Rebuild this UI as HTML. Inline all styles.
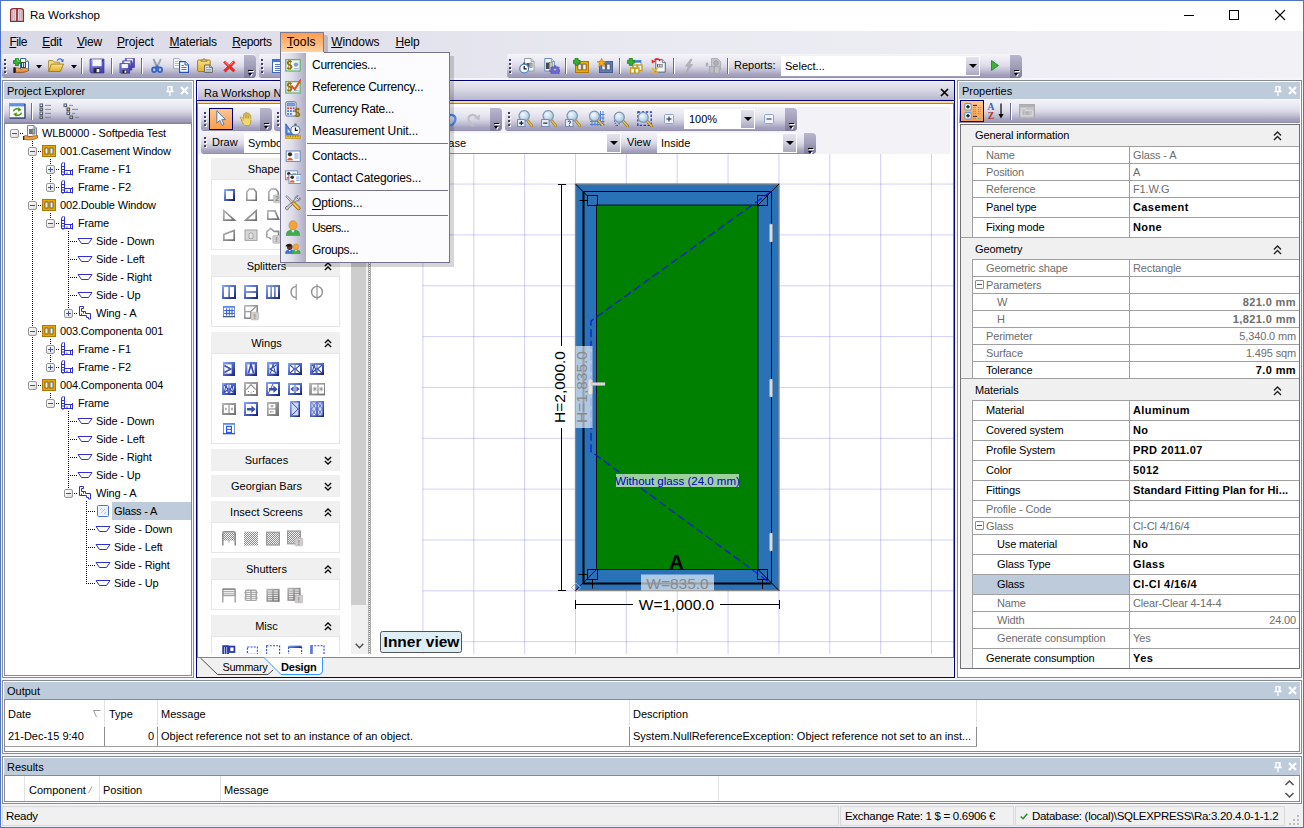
<!DOCTYPE html>
<html><head><meta charset="utf-8"><title>Ra Workshop</title>
<style>
html,body{margin:0;padding:0;}
body{width:1304px;height:828px;overflow:hidden;background:#4f74c4;font-family:"Liberation Sans",sans-serif;font-size:11px;color:#000;}
#win{position:absolute;left:0;top:0;width:1304px;height:828px;background:linear-gradient(90deg,#d9d8e6 0%,#e9e9f1 50%,#f1f1f6 100%);overflow:hidden;}
#win *{box-sizing:border-box;}
.abs{position:absolute;}
svg{display:block;}
.wb{position:absolute;background:#4f74c4;z-index:50;}
#title{position:absolute;left:0;top:0;width:1304px;height:31px;background:#fff;}
#title .appico{position:absolute;left:9px;top:7px;width:16px;height:16px;}
#title .tt{position:absolute;left:30px;top:7px;font-size:11.6px;line-height:16px;white-space:nowrap;}
.capbtn{position:absolute;}
#menubar{position:absolute;left:0;top:31px;width:1304px;height:23px;}
.mi{position:absolute;top:4px;font-size:12px;line-height:15px;white-space:nowrap;}
.mi u{text-decoration:underline;text-underline-offset:1px;text-decoration-thickness:1px;}
.mhl{position:absolute;left:280px;top:1px;width:44px;height:21px;border:1px solid #7d7b98;border-bottom:none;background:linear-gradient(180deg,#ff9d4e 0%,#ffb877 50%,#ffd6a6 100%);}
/* docked panel */
.panel{position:absolute;border:1px solid #868a95;background:#fff;}
.panel .hdr{position:absolute;left:1px;top:1px;right:1px;height:17px;background:#becbda;font-size:11px;line-height:17px;padding-left:3px;padding-top:1px;white-space:nowrap;}
.panel .ptb{position:absolute;left:1px;right:1px;top:18px;height:24px;background:linear-gradient(180deg,#f4f4f9 0%,#eae9f2 28%,#d9d8e5 52%,#bcbacf 72%,#a3a1bd 86%,#9f9dba 95%,#83819d 100%);}
.pin{position:absolute;top:4px;}
.tree{position:absolute;border:1px solid #868a95;background:#fff;overflow:hidden;}
.trow{position:absolute;left:0;height:18px;white-space:nowrap;}
.trow .tx{position:absolute;top:2px;font-size:11px;line-height:14px;padding:0 2px;letter-spacing:-0.15px;}
.trow .tx.sel{background:#becbda;top:0;height:18px;line-height:18px;padding:0 3px 0 2px;left:0;right:0;}
.exp{position:absolute;width:9px;height:9px;border:1px solid #979797;border-radius:2px;background:linear-gradient(135deg,#fff,#dedede);}
.exp i{position:absolute;left:1px;top:3px;width:5px;height:1px;background:#3a559a;}
.exp b{position:absolute;left:3px;top:1px;width:1px;height:5px;background:#3a559a;}
.dv{position:absolute;width:1px;background-image:linear-gradient(180deg,#000 50%,transparent 50%);background-size:1px 2px;}
.dh{position:absolute;height:1px;background-image:linear-gradient(90deg,#000 50%,transparent 50%);background-size:2px 1px;}
.tico{position:absolute;width:16px;height:16px;}
/* toolbars */
.tb{position:absolute;height:24px;background:linear-gradient(180deg,#f4f4f9 0%,#eae9f2 28%,#d9d8e5 52%,#bcbacf 72%,#a3a1bd 86%,#9f9dba 95%,#8a88a5 100%);border-radius:2px 4px 4px 3px;}
.tb .ovf{position:absolute;right:0;top:1px;width:12px;height:23px;border-radius:0 4px 4px 0;background:linear-gradient(180deg,#b9b7cd 0%,#a3a1bb 45%,#7c7a99 100%);}
.tb .ovf:before{content:"";position:absolute;left:4px;top:15px;width:5px;height:1px;background:#000;box-shadow:1px 1px 0 #fff;}
.tb .ovf:after{content:"";position:absolute;left:4px;top:18px;border:solid transparent;border-width:3px 2.5px 0 2.5px;border-top-color:#000;filter:drop-shadow(1px 1px 0 #fff);}
.grip{position:absolute;left:2px;top:5px;width:2px;height:2px !important;background:#3f3f74;box-shadow:0 4px 0 #3f3f74,0 8px 0 #3f3f74,0 12px 0 #3f3f74,1px 1px 0 #fff,1px 5px 0 #fff,1px 9px 0 #fff,1px 13px 0 #fff;}
.grip.g3{box-shadow:0 4px 0 #3f3f74,0 8px 0 #3f3f74,1px 1px 0 #fff,1px 5px 0 #fff,1px 9px 0 #fff;}
.tsep{position:absolute;top:4px;width:2px;height:16px;border-left:1px solid #6d6b8f;border-right:1px solid #fff;}
.ti{position:absolute;width:16px;height:16px;}
.dar{position:absolute;width:6px;height:4px;}
.combo{position:absolute;background:#fff;font-size:11px;white-space:nowrap;}
.combo .cb{position:absolute;right:1px;top:1px;bottom:1px;width:13px;background:linear-gradient(180deg,#e4e3ed 0%,#cfcedd 50%,#a9a7c1 100%);}
.combo .cb:after{content:"";position:absolute;left:2.5px;top:7px;border:solid transparent;border-width:4px 4px 0 4px;border-top-color:#000;}
.tlabel{position:absolute;font-size:11px;white-space:nowrap;}
/* document window */
#doc{position:absolute;left:196px;top:80px;width:759px;height:598px;border:1px solid #00007f;background:#fff;}
#doc .dt{position:absolute;left:0;top:0;right:0;height:19px;background:linear-gradient(180deg,#e9e8f1 0%,#d5d4e2 50%,#b8b6cd 100%);border-top:1px solid #f4f4f9;border-left:1px solid #f4f4f9;font-size:11px;line-height:17px;padding-left:6px;padding-top:3px;white-space:nowrap;}
#doc .l1{position:absolute;left:0;right:0;top:19px;height:1px;background:#00007f;}
#doc .l2{position:absolute;left:0;right:0;top:20px;height:2px;background:#ffd98c;}
#doc .inner{position:absolute;left:0;top:22px;right:0;height:555px;border:1px solid #3399ff;background:#fff;}
#doc .tabs{position:absolute;left:0;right:0;top:577px;height:19px;background:#f0f0f0;z-index:3;}
.dock{position:absolute;left:0;top:0;right:3px;height:50px;background:#f2f2f7;}
.tbox{position:absolute;background:#f0f0f0;font-size:11px;text-align:center;}
.tgrp{position:absolute;border:1px solid #e6e6e6;background:#fff;}
.chev{position:absolute;}
.xi{position:absolute;width:14px;height:14px;}
/* property grid */
.pg{position:absolute;border:1px solid #6f7177;background:#f0f0f0;overflow:hidden;}
.pr{position:absolute;left:11px;right:0;background:#fff;border-top:1px solid #a0a0a0;border-left:1px solid #a0a0a0;font-size:11px;white-space:nowrap;letter-spacing:-0.14px;}
.pr .n{position:absolute;left:0;top:0;bottom:0;width:157px;border-right:1px solid #a0a0a0;padding-left:13px;}
.pr .v{position:absolute;left:157px;top:0;bottom:0;right:0;padding-left:3px;padding-right:3px;overflow:hidden;}
.pr.g{color:#6d6d6d;}
.pr .v.b{font-weight:bold;font-size:11px;letter-spacing:0.4px;}
.pr .v.r{text-align:right;}
.pc{position:absolute;left:0;right:0;background:#f0f0f0;font-size:11px;padding-left:14px;white-space:nowrap;border-top:1px solid #a0a0a0;letter-spacing:-0.12px;}
.pexp{position:absolute;left:2px;width:9px;height:9px;border:1px solid #8c8c8c;border-radius:1px;background:#fff;}
.pexp:after{content:"";position:absolute;left:1px;top:3px;width:5px;height:1px;background:#555;}
/* bottom panels */
.grid{position:absolute;border:1px solid #868a95;background:#fff;overflow:hidden;font-size:11px;white-space:nowrap;}
.grid span{position:absolute;line-height:14px;}
.vl{position:absolute;width:1px;background:#e2e2e2;}
.vd{position:absolute;width:1px;background:#8c8c8c;}
#status{position:absolute;left:1px;top:805px;width:1302px;height:22px;background:#f0f0f0;font-size:11.5px;letter-spacing:-0.3px;white-space:nowrap;}
#status .sp{position:absolute;top:1px;height:20px;border:1px solid #d9d9d9;line-height:18px;}
/* dropdown menu */
#ddm{position:absolute;left:280px;top:52px;width:170px;height:211px;background:#fcfbfe;border:1px solid #75738f;border-top:none;box-shadow:4px 4px 0 0 rgba(0,0,0,0.16);z-index:20;}
#ddm .top{position:absolute;left:43px;right:0;top:0;height:1px;background:#75738f;}
#ddm .strip{position:absolute;left:0;top:1px;width:25px;bottom:0;background:linear-gradient(90deg,#f1f0f7 0%,#dddce8 45%,#aeacc6 100%);}
#ddm .it{position:absolute;left:31px;font-size:12px;letter-spacing:-0.25px;line-height:16px;white-space:nowrap;}
#ddm .sep{position:absolute;left:26px;right:1px;height:1px;background:#75738f;}
#ddm .mic{position:absolute;left:4px;width:16px;height:16px;}
.mshadow{position:absolute;left:324px;top:35px;width:4px;height:17px;background:rgba(0,0,0,0.17);border-radius:0 2px 0 0;z-index:19;}
#doc .grip{left:3px;}

</style></head>
<body>
<svg width="0" height="0" style="position:absolute"><defs>
<linearGradient id="gSave" x1="0" y1="0" x2="1" y2="1"><stop offset="0" stop-color="#8f8be6"/><stop offset="1" stop-color="#3f3aa8"/></linearGradient>
<linearGradient id="gFold" x1="0" y1="0" x2="0" y2="1"><stop offset="0" stop-color="#fbe38a"/><stop offset="1" stop-color="#e5ae2a"/></linearGradient>
<linearGradient id="gHand" x1="0" y1="0" x2="0" y2="1"><stop offset="0" stop-color="#f7c56a"/><stop offset="1" stop-color="#e0701a"/></linearGradient>
<radialGradient id="gLens" cx="0.4" cy="0.35" r="0.7"><stop offset="0" stop-color="#f4fbff"/><stop offset="1" stop-color="#9fc0dc"/></radialGradient>
<linearGradient id="gOrg" x1="0" y1="0" x2="0" y2="1"><stop offset="0" stop-color="#ffc48e"/><stop offset="1" stop-color="#ff9b45"/></linearGradient>
<linearGradient id="gBlu" x1="0" y1="0" x2="1" y2="1"><stop offset="0" stop-color="#8eaaf6"/><stop offset="0.5" stop-color="#4f66c8"/><stop offset="1" stop-color="#14206e"/></linearGradient>
<linearGradient id="gGry" x1="0" y1="0" x2="1" y2="1"><stop offset="0" stop-color="#b8b8b8"/><stop offset="1" stop-color="#6e6e6e"/></linearGradient>
<pattern id="pMesh" width="2" height="2" patternUnits="userSpaceOnUse"><rect width="2" height="2" fill="#f2f2f2"/><rect width="1" height="1" fill="#8c8c8c"/><rect x="1" y="1" width="1" height="1" fill="#8c8c8c"/></pattern>
</defs></svg>
<div id="win">
<div class="wb" style="left:0;top:0;width:1304px;height:1px"></div><div class="wb" style="left:0;top:0;width:1px;height:828px"></div><div class="wb" style="left:1303px;top:0;width:1px;height:828px"></div><div class="wb" style="left:0;top:827px;width:1304px;height:1px"></div>
<div id="title"><div class="appico"><svg width="16" height="16" viewBox="9 7 16 16"><path d="M10.6 21.4V10.8Q10.6 8.6 13.4 8.6H20.6Q23.4 8.6 23.4 10.8V21.4Z" fill="#e4d4d7" stroke="#8b2a35" stroke-width="1.3"/><path d="M12.6 10.4V20.6M14.4 10V20.6M19.6 10V20.6M21.4 10.4V20.6" stroke="#c4aab0" stroke-width="0.9"/><path d="M17 8.6V21.4" stroke="#8b2a35" stroke-width="1.7"/></svg></div><span class="tt">Ra Workshop</span>
<svg class="capbtn" style="left:1184px;top:9px" width="12" height="12" viewBox="0 0 12 12"><path d="M0 6.5H10" stroke="#000" stroke-width="1" fill="none"/></svg>
<svg class="capbtn" style="left:1229px;top:9px" width="12" height="12" viewBox="0 0 12 12"><rect x="0.5" y="1.5" width="9" height="9" stroke="#000" stroke-width="1" fill="none"/></svg>
<svg class="capbtn" style="left:1275px;top:9px" width="12" height="12" viewBox="0 0 12 12"><path d="M0 1L10 11M10 1L0 11" stroke="#000" stroke-width="1.1" fill="none"/></svg>
</div>
<div id="menubar">
<div class="mhl"></div>
<span class="mi" style="left:9.4px;letter-spacing:-0.46px"><u>F</u>ile</span>
<span class="mi" style="left:42.2px;letter-spacing:-0.27px"><u>E</u>dit</span>
<span class="mi" style="left:76.9px;letter-spacing:-0.20px"><u>V</u>iew</span>
<span class="mi" style="left:116.9px;letter-spacing:-0.07px"><u>P</u>roject</span>
<span class="mi" style="left:169.4px;letter-spacing:-0.13px"><u>M</u>aterials</span>
<span class="mi" style="left:232.2px;letter-spacing:-0.38px"><u>R</u>eports</span>
<span class="mi" style="left:286.9px;letter-spacing:0.14px"><u>T</u>ools</span>
<span class="mi" style="left:331.2px;letter-spacing:-0.06px"><u>W</u>indows</span>
<span class="mi" style="left:395.5px;letter-spacing:-0.17px"><u>H</u>elp</span>
</div>
<div id="lightbg" class="abs" style="left:1px;top:78px;width:1302px;height:727px;background:#f5f5fa"></div>
<div class="tb" style="left:2px;top:54px;width:254px;"><div class="grip"></div><div class="ti" style="left:11px;top:4px"><svg width="16" height="16" viewBox="0 0 16 16"><path d="M7.5 0.5H12.5L15.5 3.5V12.5H7.5Z" fill="#f7fafe" stroke="#3e6aa6"/><path d="M12.5 0.5V3.5H15.5" fill="#cfe0f5" stroke="#3e6aa6" stroke-width="0.8"/><rect x="8.5" y="4.5" width="4" height="5" fill="#dfe3ea" stroke="#333" stroke-width="0.9"/><path d="M10.5 4.5V9.5" stroke="#333" stroke-width="0.8"/><path d="M2.5 10.2C4 9.6 6 10 7.5 11L12 10.5C13.5 10.3 15 10.6 15.6 11.2V12.5C12 14.8 7 15.2 2.5 14.3Z" fill="url(#gHand)" stroke="#7a3a08" stroke-width="0.6"/><rect x="0.3" y="9.3" width="2.4" height="5.6" fill="#1a1a2a"/><path d="M2.5 0.5H5.5V2.5H7.5V5.5H5.5V7.5H2.5V5.5H0.5V2.5H2.5Z" fill="#35b035" stroke="#1d7a1d" stroke-width="0.8"/><path d="M3.3 1.3H4.7V3.3H6.7" stroke="#8fe08f" stroke-width="0.7" fill="none"/></svg></div><svg class="dar" style="left:33.6px;top:11px" viewBox="0 0 6 4"><path d="M0 0H6L3 3.5Z" fill="#000"/></svg><div class="ti" style="left:46px;top:4px"><svg width="16" height="16" viewBox="0 0 16 16"><path d="M0.6 13.4V2.6H5L6.4 4.2H11.4V6" fill="#f6dc80" stroke="#a88a30" stroke-width="0.9"/><path d="M0.6 13.5L3.4 6.1H15.5L12.4 13.5Z" fill="url(#gFold)" stroke="#9a7820" stroke-width="0.9"/><path d="M9.2 2.6C10.5 0.4 13.6 0.4 14.6 2.8" fill="none" stroke="#3d72c4" stroke-width="1.3"/><path d="M15.9 1.2L15.2 4.6L12.4 3Z" fill="#3d72c4"/></svg></div><svg class="dar" style="left:68.6px;top:11px" viewBox="0 0 6 4"><path d="M0 0H6L3 3.5Z" fill="#000"/></svg><div class="tsep" style="left:79px"></div><div class="ti" style="left:87px;top:4px"><svg width="16" height="16" viewBox="0 0 16 16"><path d="M1 1H15V15H2.2L1 13.8Z" fill="url(#gSave)" stroke="#37339a" stroke-width="0.7"/><rect x="3.6" y="1.6" width="8.8" height="6.4" fill="#f4f6fb" stroke="#d0d4ec" stroke-width="0.5"/><rect x="4.6" y="10.2" width="6.6" height="4.6" fill="#23232d"/><rect x="7.6" y="11" width="2.8" height="3.2" fill="#e8ecf4"/><rect x="13.2" y="2" width="1" height="1.2" fill="#26236a"/></svg></div><div class="tsep" style="left:109px"></div><div class="ti" style="left:117px;top:4px"><svg width="16" height="16" viewBox="0 0 16 16"><g transform="translate(5.6,-0.4) scale(0.66)"><path d="M1 1H15V15H2.2L1 13.8Z" fill="url(#gSave)" stroke="#37339a" stroke-width="0.9"/><rect x="3.6" y="1.8" width="8.8" height="5.6" fill="#f4f6fb"/><rect x="4.8" y="10.4" width="6.2" height="4.4" fill="#23232d"/><rect x="7.6" y="11" width="2.6" height="3.2" fill="#e8ecf4"/></g><g transform="translate(3,2.2) scale(0.66)"><path d="M1 1H15V15H2.2L1 13.8Z" fill="url(#gSave)" stroke="#37339a" stroke-width="0.9"/><rect x="3.6" y="1.8" width="8.8" height="5.6" fill="#f4f6fb"/><rect x="4.8" y="10.4" width="6.2" height="4.4" fill="#23232d"/><rect x="7.6" y="11" width="2.6" height="3.2" fill="#e8ecf4"/></g><g transform="translate(0.2,4.8) scale(0.7)"><path d="M1 1H15V15H2.2L1 13.8Z" fill="url(#gSave)" stroke="#37339a" stroke-width="0.9"/><rect x="3.6" y="1.8" width="8.8" height="5.6" fill="#f4f6fb"/><rect x="4.8" y="10.4" width="6.2" height="4.4" fill="#23232d"/><rect x="7.6" y="11" width="2.6" height="3.2" fill="#e8ecf4"/></g></svg></div><div class="tsep" style="left:139px"></div><div class="ti" style="left:147px;top:4px"><svg width="16" height="16" viewBox="0 0 16 16"><path d="M5 0.8L8.6 8.6L7.4 9.6L4.2 1.6Z" fill="#a4acb8" stroke="#6e7684" stroke-width="0.5"/><path d="M11.4 0.8L7.6 8.6L8.8 9.6L12 1.6Z" fill="#c2c8d2" stroke="#6e7684" stroke-width="0.5"/><ellipse cx="5.2" cy="11.8" rx="2.1" ry="2.4" fill="none" stroke="#2f62c8" stroke-width="1.7"/><ellipse cx="11" cy="11.8" rx="2.1" ry="2.4" fill="none" stroke="#2f62c8" stroke-width="1.7"/><path d="M6.6 9.8L8.1 8.2L9.6 9.8" fill="none" stroke="#2f62c8" stroke-width="1.5"/></svg></div><div class="ti" style="left:171px;top:4px"><svg width="16" height="16" viewBox="0 0 16 16"><path d="M0.6 0.6H6L8.4 3V10.4H0.6Z" fill="#fbfdff" stroke="#8ea6cc" stroke-width="0.9"/><path d="M2 3.5H5M2 5.5H6.5M2 7.5H6.5" stroke="#9fc0ea" stroke-width="1"/><path d="M6.6 3.6H12L15.4 7V14.4H6.6Z" fill="#fbfdff" stroke="#2a4fb0" stroke-width="1.1"/><path d="M12 3.6V7H15.4" fill="#c8d8f4" stroke="#2a4fb0" stroke-width="0.9"/><path d="M8.4 7.5H11M8.4 9.5H13.6M8.4 11.5H13.6" stroke="#3f78d8" stroke-width="1.1"/></svg></div><div class="ti" style="left:195px;top:4px"><svg width="16" height="16" viewBox="0 0 16 16"><rect x="0.6" y="2" width="12.6" height="11.6" rx="0.8" fill="url(#gFold)" stroke="#9a7412" stroke-width="0.9"/><path d="M4 3.4V2.2H5.6C5.6 0.2 8.4 0.2 8.4 2.2H10V3.4Z" fill="#f3e2a4" stroke="#8a6a18" stroke-width="0.7"/><circle cx="7" cy="1.8" r="0.6" fill="#6a5010"/><path d="M7.6 7H12.6L15.4 9.6V14.4H7.6Z" fill="#dfe6ee" stroke="#5a5a52" stroke-width="0.9"/><path d="M12.6 7V9.6H15.4" fill="#b8c4d4" stroke="#5a5a52" stroke-width="0.7"/><path d="M9 9.5H11.6M9 11.5H14M9 13H14" stroke="#8a9bb4" stroke-width="0.9"/></svg></div><div class="ti" style="left:219px;top:4px"><svg width="16" height="16" viewBox="0 0 16 16"><g transform="translate(8.3,8.4) scale(0.86) translate(-8,-8)"><path d="M3 1.6L8 6.2L12.6 1.4L14.8 3.4L10.4 8.2L14.8 12.4L12.6 14.6L8 10.4L3.6 14.8L1.4 12.6L5.8 8.2L1.2 3.6Z" fill="#ea2e28" stroke="#c8221c" stroke-width="0.5"/><path d="M3.2 2.8L7.6 7M12.6 2.6L9 6.4" stroke="#ff9a94" stroke-width="1.1" fill="none"/></g></svg></div><div class="ovf"></div></div>
<div class="tb" style="left:259px;top:54px;width:180px;"><div class="grip"></div><div class="ti" style="left:12px;top:4px"><svg width="16" height="16" viewBox="0 0 16 16"><rect x="1.5" y="1.5" width="13" height="13" fill="#fff" stroke="#3a66b8"/><rect x="1.5" y="1.5" width="13" height="2.6" fill="#3f7ae0"/><path d="M4 6.5H12M4 8.5H12M4 10.5H12M4 12.5H10" stroke="#3a66b8" stroke-width="0.9"/></svg></div><div class="ovf"></div></div>
<div class="tb" style="left:507px;top:54px;width:515px;"><div class="grip"></div><div class="ti" style="left:12px;top:4px"><svg width="16" height="16" viewBox="0 0 16 16"><path d="M5.5 0.5h6.5l3 3v9.5h-9.5z" fill="#f6f7f9" stroke="#8a8f98" stroke-width="0.9"/><path d="M12.0 0.5v3h3" fill="#d4d8e0" stroke="#8a8f98" stroke-width="0.7"/><rect x="7.5" y="5" width="3" height="4.4" fill="#555"/><rect x="10.9" y="5" width="2.2" height="4.4" fill="#bbb" stroke="#555" stroke-width="0.5"/><circle cx="5.2" cy="10.6" r="4.4" fill="#eef5ff" stroke="#4a78b4" stroke-width="1.1"/><rect x="4" y="4.6" width="2.4" height="1.4" fill="#3a5a8c"/><path d="M5.2 8V10.8H7.6" stroke="#111" stroke-width="1.2" fill="none"/></svg></div><div class="ti" style="left:37px;top:4px"><svg width="16" height="16" viewBox="0 0 16 16"><path d="M0.8 0.5h6.5l3 3v9.5h-9.5z" fill="#f6f7f9" stroke="#5a82b4" stroke-width="0.9"/><path d="M7.3 0.5v3h3" fill="#d4d8e0" stroke="#5a82b4" stroke-width="0.7"/><rect x="2" y="4.6" width="3.2" height="6.4" fill="#4a4a4a"/><rect x="5.6" y="4.6" width="2.6" height="6.4" fill="#c8c8c8" stroke="#555" stroke-width="0.5"/><g transform="translate(11,11.6)"><path d="M-1 -4.6h2l0.3 1.3 1.1 0.5 1.2-0.7 1.4 1.4-0.7 1.2 0.5 1.1 1.3 0.3v2l-1.3 0.3-0.5 1.1 0.7 1.2-1.4 1.4-1.2-0.7-1.1 0.5-0.3 1.3h-2l-0.3-1.3-1.1-0.5-1.2 0.7-1.4-1.4 0.7-1.2-0.5-1.1-1.3-0.3v-2l1.3-0.3 0.5-1.1-0.7-1.2 1.4-1.4 1.2 0.7 1.1-0.5z" transform="scale(0.86)" fill="#6a68d8" stroke="#4442b0" stroke-width="0.6"/><circle r="1.4" fill="#d8d49a" stroke="#4442b0" stroke-width="0.5"/></g></svg></div><div class="tsep" style="left:58px"></div><div class="ti" style="left:66px;top:4px"><svg width="16" height="16" viewBox="0 0 16 16"><rect x="2.5" y="3.5" width="13" height="11" fill="#e9ac00" stroke="#b07a00" stroke-width="1"/><rect x="4.9" y="6.1" width="3.3" height="5.8" fill="#ececff" stroke="#433" stroke-width="0.6"/><rect x="9.8" y="6.1" width="3.3" height="5.8" fill="#ececff" stroke="#433" stroke-width="0.6"/><path d="M2.1 0.3h3v2h2v3h-2v2h-3v-2h-2v-3h2z" fill="#35b035" stroke="#1d7a1d" stroke-width="0.8"/></svg></div><div class="ti" style="left:90px;top:4px"><svg width="16" height="16" viewBox="0 0 16 16"><rect x="2.5" y="3.5" width="13" height="11" fill="#5d7db6" stroke="#44608f" stroke-width="1"/><rect x="4.9" y="6.1" width="3.3" height="5.8" fill="#ececff" stroke="#433" stroke-width="0.6"/><rect x="9.8" y="6.1" width="3.3" height="5.8" fill="#ececff" stroke="#433" stroke-width="0.6"/><path d="M4.6 0.2L6 3.2L9.2 3.5L6.8 5.6L7.6 8.8L4.6 7.1L1.6 8.8L2.4 5.6L0 3.5L3.2 3.2Z" fill="#f2a818" stroke="#b87808" stroke-width="0.5"/></svg></div><div class="tsep" style="left:112px"></div><div class="ti" style="left:120px;top:4px"><svg width="16" height="16" viewBox="0 0 16 16"><rect x="5.5" y="2.5" width="8.5" height="8" fill="#fff" stroke="#5a86d0" stroke-width="0.8"/><rect x="5.5" y="2.5" width="8.5" height="2.2" fill="#3f7ae0"/><rect x="10.6" y="7" width="4.4" height="5.6" fill="#dafaff" stroke="#c89a10" stroke-width="1.3"/><rect x="3.6" y="10" width="4" height="5.2" fill="#dafaff" stroke="#c89a10" stroke-width="1.3"/><rect x="8" y="10" width="4" height="5.2" fill="#dafaff" stroke="#c89a10" stroke-width="1.3"/><rect x="6" y="7" width="4" height="3" fill="#dafaff" stroke="#c89a10" stroke-width="1.3"/><path d="M2.3 0.3h3v2h2v3h-2v2h-3v-2h-2v-3h2z" fill="#35b035" stroke="#1d7a1d" stroke-width="0.8"/></svg></div><div class="ti" style="left:144px;top:4px"><svg width="16" height="16" viewBox="0 0 16 16"><path d="M4.8 1.6h6.5l3 3v9.5h-9.5z" fill="#f2f5fa" stroke="#4a5a78" stroke-width="0.9"/><path d="M11.3 1.6v3h3" fill="#d4d8e0" stroke="#4a5a78" stroke-width="0.7"/><rect x="6" y="6" width="5.6" height="3.4" fill="#666"/><path d="M7 6.6h1.4v2.2H7zM9.2 6.6h1.6v2.2H9.2z" fill="#ddd"/><path d="M3.6 2.6C4.4 0.2 8.6 0.2 8.8 3.2" fill="none" stroke="#ee1a1a" stroke-width="1.5"/><path d="M0.6 1.4L4.8 3.8L0.8 5.2Z" fill="#ee1a1a"/><path d="M1.4 15.2L6.6 10.2" stroke="#eeb21a" stroke-width="1.7"/><rect x="1" y="10.2" width="2" height="2" fill="#eeb21a"/><rect x="5.2" y="13.6" width="2" height="2" fill="#eeb21a"/></svg></div><div class="tsep" style="left:166px"></div><div class="ti" style="left:174px;top:4px"><svg width="16" height="16" viewBox="0 0 16 16"><path d="M9.6 1.2L4.4 8.2H7.4L5.2 14.6L11.6 6.6H8.4L11.2 1.2Z" fill="#b4b4bc" stroke="#9a9aa4" stroke-width="0.5"/></svg></div><div class="ti" style="left:198px;top:4px"><svg width="16" height="16" viewBox="0 0 16 16"><path d="M6.5 0.5H12.5L15.5 3.5V12H6.5Z" fill="#c6c6cc" stroke="#a4a4ac" stroke-width="0.8"/><circle cx="11" cy="5" r="2.4" fill="#b0b0b8" stroke="#9a9aa2" stroke-width="0.7"/><rect x="4.5" y="8.5" width="4.6" height="6.6" fill="#bcbcc4" stroke="#a0a0a8" stroke-width="0.7"/><rect x="9.6" y="8.5" width="4.6" height="6.6" fill="#c4c4cc" stroke="#a0a0a8" stroke-width="0.7"/><path d="M0.8 4.6H3.2V8.6H0.8Z" fill="#b0b0b8"/></svg></div><div class="tsep" style="left:220px"></div><span class="tlabel" style="left:227px;top:5px">Reports:</span><div class="combo" style="left:274px;top:2px;width:199px;height:20px;line-height:20px;padding-left:4px">Select...<div class="cb"></div></div><svg class="abs" style="left:484px;top:6px" width="8" height="11" viewBox="0 0 8 11"><path d="M0.5 0.5L7.5 5.5L0.5 10.5Z" fill="#3cb43c" stroke="#1e7a1e" stroke-width="0.8"/></svg><div class="ovf"></div></div>
<div class="panel" style="left:2px;top:80px;width:192px;height:598px">
<div class="hdr">Project Explorer<span class="pin" style="left:162px"><svg width="8" height="10" viewBox="0 0 8 10"><path d="M2 0.7H6V5.3H2ZM0.3 5.5H7.7M4 5.5V10" stroke="#fff" stroke-width="1.3" fill="none"/><path d="M5.2 1V5" stroke="#fff" stroke-width="1.2"/></svg></span><span class="pin" style="left:176px;top:4px"><svg width="9" height="9" viewBox="0 0 9 9"><path d="M1 1L8 8M8 1L1 8" stroke="#fff" stroke-width="2.2" fill="none"/></svg></span></div>
<div class="ptb"><svg class="abs" style="left:5px;top:4px" width="17" height="16" viewBox="0 0 17 16"><rect x="0.5" y="0.5" width="15.4" height="14.4" fill="#fdfeff" stroke="#7f9fd8" stroke-width="0.8"/><rect x="0.4" y="0.4" width="15.6" height="3" fill="#5f8fe8"/><path d="M16 1V15.2H0.6" fill="none" stroke="#2c3e5e" stroke-width="1.2"/><path d="M4.4 8.4C4.8 5.8 8.4 5 10.6 6.6" fill="none" stroke="#4f9a1c" stroke-width="1.5"/><path d="M9.4 4L12.6 7L9 8.8Z" fill="#4f9a1c"/><path d="M12.4 9.6C12 12.2 8.4 13 6.2 11.4" fill="none" stroke="#4f9a1c" stroke-width="1.5"/><path d="M7.4 14L4.2 11L7.8 9.2Z" fill="#4f9a1c"/></svg><div class="tsep" style="left:27px;top:4px;height:17px"></div><svg class="abs" style="left:35px;top:4px" width="14" height="16" viewBox="0 0 14 16"><rect x="1" y="1" width="2.6" height="2.6" fill="#fff" stroke="#3c4864" stroke-width="0.9"/><rect x="1" y="5" width="2.6" height="2.6" fill="#f4d000" stroke="#3c4864" stroke-width="0.9"/><rect x="1" y="9" width="2.6" height="2.6" fill="#fff" stroke="#3c4864" stroke-width="0.9"/><rect x="1" y="13" width="2.6" height="2.6" fill="#f4d000" stroke="#3c4864" stroke-width="0.9"/><path d="M6 2.4H12M6 6.4H12M6 10.4H12M6 14.4H12" stroke="#70809a" stroke-width="0.9"/></svg><svg class="abs" style="left:59px;top:4px" width="17" height="16" viewBox="0 0 17 16"><rect x="1" y="1" width="2.6" height="2.6" fill="#fff" stroke="#3c4864" stroke-width="0.9"/><rect x="4" y="5" width="2.6" height="2.6" fill="#f4d000" stroke="#3c4864" stroke-width="0.9"/><rect x="4" y="9" width="2.6" height="2.6" fill="#fff" stroke="#3c4864" stroke-width="0.9"/><rect x="7" y="13" width="2.6" height="2.6" fill="#f4d000" stroke="#3c4864" stroke-width="0.9"/><path d="M6 2.4H10M9 6.4H15M9 10.4H12M12 14.4H16" stroke="#70809a" stroke-width="0.9"/></svg></div>
<div class="tree" style="left:1px;top:42px;width:188px;height:553px">
<div class="dh" style="left:15px;top:9px;width:4px"></div>
<div class="dh" style="left:33px;top:27px;width:4px"></div>
<div class="dv" style="left:27px;top:17px;height:6px"></div>
<div class="dh" style="left:51px;top:45px;width:4px"></div>
<div class="dv" style="left:45px;top:35px;height:6px"></div>
<div class="dh" style="left:51px;top:63px;width:4px"></div>
<div class="dv" style="left:45px;top:51px;height:8px"></div>
<div class="dh" style="left:33px;top:81px;width:4px"></div>
<div class="dv" style="left:27px;top:33px;height:44px"></div>
<div class="dh" style="left:51px;top:99px;width:4px"></div>
<div class="dv" style="left:45px;top:89px;height:6px"></div>
<div class="dh" style="left:63px;top:117px;width:9px"></div>
<div class="dv" style="left:63px;top:107px;height:11px"></div>
<div class="dh" style="left:63px;top:135px;width:9px"></div>
<div class="dv" style="left:63px;top:117px;height:19px"></div>
<div class="dh" style="left:63px;top:153px;width:9px"></div>
<div class="dv" style="left:63px;top:135px;height:19px"></div>
<div class="dh" style="left:63px;top:171px;width:9px"></div>
<div class="dv" style="left:63px;top:153px;height:19px"></div>
<div class="dh" style="left:69px;top:189px;width:4px"></div>
<div class="dv" style="left:63px;top:171px;height:14px"></div>
<div class="dh" style="left:33px;top:207px;width:4px"></div>
<div class="dv" style="left:27px;top:87px;height:116px"></div>
<div class="dh" style="left:51px;top:225px;width:4px"></div>
<div class="dv" style="left:45px;top:215px;height:6px"></div>
<div class="dh" style="left:51px;top:243px;width:4px"></div>
<div class="dv" style="left:45px;top:231px;height:8px"></div>
<div class="dh" style="left:33px;top:261px;width:4px"></div>
<div class="dv" style="left:27px;top:213px;height:44px"></div>
<div class="dh" style="left:51px;top:279px;width:4px"></div>
<div class="dv" style="left:45px;top:269px;height:6px"></div>
<div class="dh" style="left:63px;top:297px;width:9px"></div>
<div class="dv" style="left:63px;top:287px;height:11px"></div>
<div class="dh" style="left:63px;top:315px;width:9px"></div>
<div class="dv" style="left:63px;top:297px;height:19px"></div>
<div class="dh" style="left:63px;top:333px;width:9px"></div>
<div class="dv" style="left:63px;top:315px;height:19px"></div>
<div class="dh" style="left:63px;top:351px;width:9px"></div>
<div class="dv" style="left:63px;top:333px;height:19px"></div>
<div class="dh" style="left:69px;top:369px;width:4px"></div>
<div class="dv" style="left:63px;top:351px;height:14px"></div>
<div class="dh" style="left:81px;top:387px;width:9px"></div>
<div class="dv" style="left:81px;top:377px;height:11px"></div>
<div class="dh" style="left:81px;top:405px;width:9px"></div>
<div class="dv" style="left:81px;top:387px;height:19px"></div>
<div class="dh" style="left:81px;top:423px;width:9px"></div>
<div class="dv" style="left:81px;top:405px;height:19px"></div>
<div class="dh" style="left:81px;top:441px;width:9px"></div>
<div class="dv" style="left:81px;top:423px;height:19px"></div>
<div class="dh" style="left:81px;top:459px;width:9px"></div>
<div class="dv" style="left:81px;top:441px;height:19px"></div>
<div class="exp" style="left:5px;top:5px"><i></i></div>
<div class="tico" style="left:18px;top:1px"><svg width="16" height="16" viewBox="0 0 16 16"><path d="M4.5 0.5H11L13.5 3V11.5H4.5Z" fill="#f4f6fb" stroke="#7d8aa5"/><path d="M11 0.5V3H13.5" fill="#c9d3ea" stroke="#7d8aa5"/><rect x="6" y="4" width="3" height="5" fill="#777" /><rect x="9.5" y="4" width="2.5" height="5" fill="#aaa" stroke="#555" stroke-width="0.6"/><path d="M0.5 11.5C2 10 4 10.5 6 12L10 11C12 10.5 13.5 11 14.5 10.5V13C11 15 5 15.5 0.5 14Z" fill="#f0a040" stroke="#8a4a10" stroke-width="0.7"/><path d="M0.5 11V15" stroke="#222" stroke-width="1.6"/></svg></div>
<div class="trow" style="left:35px;top:0px;"><span class="tx">WLB0000 - Softpedia Test</span></div>
<div class="exp" style="left:23px;top:23px"><i></i></div>
<div class="tico" style="left:36px;top:19px"><svg width="16" height="16" viewBox="0 0 16 16"><rect x="1.5" y="2.5" width="13" height="11" fill="#e9a800" stroke="#b07800"/><rect x="4" y="5" width="3" height="6" fill="#ececff" stroke="#553" stroke-width="0.8"/><rect x="9" y="5" width="3" height="6" fill="#ececff" stroke="#553" stroke-width="0.8"/></svg></div>
<div class="trow" style="left:53px;top:18px;"><span class="tx">001.Casement Window</span></div>
<div class="exp" style="left:41px;top:41px"><i></i><b></b></div>
<div class="tico" style="left:54px;top:37px"><svg width="16" height="16" viewBox="0 0 16 16"><path d="M4.5 1.5Q2.5 1.5 2.5 4V13.5H5.5V1.5M2.5 5.5H5.5M2.5 8.5H5.5M2.5 11H5.5M5.5 9.5H13.5V13.5H5.5M13.5 8V14.5M11.5 9.5V13.5M8 11.5V13.5M2.5 13.5L3.5 14.5M5.5 13.5L4.5 14.5" fill="none" stroke="#3030d0" stroke-width="1"/></svg></div>
<div class="trow" style="left:71px;top:36px;"><span class="tx">Frame - F1</span></div>
<div class="exp" style="left:41px;top:59px"><i></i><b></b></div>
<div class="tico" style="left:54px;top:55px"><svg width="16" height="16" viewBox="0 0 16 16"><path d="M4.5 1.5Q2.5 1.5 2.5 4V13.5H5.5V1.5M2.5 5.5H5.5M2.5 8.5H5.5M2.5 11H5.5M5.5 9.5H13.5V13.5H5.5M13.5 8V14.5M11.5 9.5V13.5M8 11.5V13.5M2.5 13.5L3.5 14.5M5.5 13.5L4.5 14.5" fill="none" stroke="#3030d0" stroke-width="1"/></svg></div>
<div class="trow" style="left:71px;top:54px;"><span class="tx">Frame - F2</span></div>
<div class="exp" style="left:23px;top:77px"><i></i></div>
<div class="tico" style="left:36px;top:73px"><svg width="16" height="16" viewBox="0 0 16 16"><rect x="1.5" y="2.5" width="13" height="11" fill="#e9a800" stroke="#b07800"/><rect x="4" y="5" width="3" height="6" fill="#ececff" stroke="#553" stroke-width="0.8"/><rect x="9" y="5" width="3" height="6" fill="#ececff" stroke="#553" stroke-width="0.8"/></svg></div>
<div class="trow" style="left:53px;top:72px;"><span class="tx">002.Double Window</span></div>
<div class="exp" style="left:41px;top:95px"><i></i></div>
<div class="tico" style="left:54px;top:91px"><svg width="16" height="16" viewBox="0 0 16 16"><path d="M4.5 1.5Q2.5 1.5 2.5 4V13.5H5.5V1.5M2.5 5.5H5.5M2.5 8.5H5.5M2.5 11H5.5M5.5 9.5H13.5V13.5H5.5M13.5 8V14.5M11.5 9.5V13.5M8 11.5V13.5M2.5 13.5L3.5 14.5M5.5 13.5L4.5 14.5" fill="none" stroke="#3030d0" stroke-width="1"/></svg></div>
<div class="trow" style="left:71px;top:90px;"><span class="tx">Frame</span></div>
<div class="tico" style="left:72px;top:109px"><svg width="16" height="16" viewBox="0 0 16 16"><path d="M1 5.5H15L11.5 10.5H4.5Z" fill="none" stroke="#3030d0" stroke-width="1"/></svg></div>
<div class="trow" style="left:89px;top:108px;"><span class="tx">Side - Down</span></div>
<div class="tico" style="left:72px;top:127px"><svg width="16" height="16" viewBox="0 0 16 16"><path d="M1 5.5H15L11.5 10.5H4.5Z" fill="none" stroke="#3030d0" stroke-width="1"/></svg></div>
<div class="trow" style="left:89px;top:126px;"><span class="tx">Side - Left</span></div>
<div class="tico" style="left:72px;top:145px"><svg width="16" height="16" viewBox="0 0 16 16"><path d="M1 5.5H15L11.5 10.5H4.5Z" fill="none" stroke="#3030d0" stroke-width="1"/></svg></div>
<div class="trow" style="left:89px;top:144px;"><span class="tx">Side - Right</span></div>
<div class="tico" style="left:72px;top:163px"><svg width="16" height="16" viewBox="0 0 16 16"><path d="M1 5.5H15L11.5 10.5H4.5Z" fill="none" stroke="#3030d0" stroke-width="1"/></svg></div>
<div class="trow" style="left:89px;top:162px;"><span class="tx">Side - Up</span></div>
<div class="exp" style="left:59px;top:185px"><i></i><b></b></div>
<div class="tico" style="left:72px;top:181px"><svg width="16" height="16" viewBox="0 0 16 16"><path d="M2.5 1.5H6.5V3.5H4.5V6.5H8.5V8.5H13.5V14H11.5V12.5H9.5V10.5H2.5Z" fill="none" stroke="#3030d0" stroke-width="1"/><path d="M4.5 8.5V10.5M6.5 6.5V8.5" stroke="#3030d0" stroke-width="1"/></svg></div>
<div class="trow" style="left:89px;top:180px;"><span class="tx">Wing - A</span></div>
<div class="exp" style="left:23px;top:203px"><i></i></div>
<div class="tico" style="left:36px;top:199px"><svg width="16" height="16" viewBox="0 0 16 16"><rect x="1.5" y="2.5" width="13" height="11" fill="#e9a800" stroke="#b07800"/><rect x="4" y="5" width="3" height="6" fill="#ececff" stroke="#553" stroke-width="0.8"/><rect x="9" y="5" width="3" height="6" fill="#ececff" stroke="#553" stroke-width="0.8"/></svg></div>
<div class="trow" style="left:53px;top:198px;"><span class="tx">003.Componenta 001</span></div>
<div class="exp" style="left:41px;top:221px"><i></i><b></b></div>
<div class="tico" style="left:54px;top:217px"><svg width="16" height="16" viewBox="0 0 16 16"><path d="M4.5 1.5Q2.5 1.5 2.5 4V13.5H5.5V1.5M2.5 5.5H5.5M2.5 8.5H5.5M2.5 11H5.5M5.5 9.5H13.5V13.5H5.5M13.5 8V14.5M11.5 9.5V13.5M8 11.5V13.5M2.5 13.5L3.5 14.5M5.5 13.5L4.5 14.5" fill="none" stroke="#3030d0" stroke-width="1"/></svg></div>
<div class="trow" style="left:71px;top:216px;"><span class="tx">Frame - F1</span></div>
<div class="exp" style="left:41px;top:239px"><i></i><b></b></div>
<div class="tico" style="left:54px;top:235px"><svg width="16" height="16" viewBox="0 0 16 16"><path d="M4.5 1.5Q2.5 1.5 2.5 4V13.5H5.5V1.5M2.5 5.5H5.5M2.5 8.5H5.5M2.5 11H5.5M5.5 9.5H13.5V13.5H5.5M13.5 8V14.5M11.5 9.5V13.5M8 11.5V13.5M2.5 13.5L3.5 14.5M5.5 13.5L4.5 14.5" fill="none" stroke="#3030d0" stroke-width="1"/></svg></div>
<div class="trow" style="left:71px;top:234px;"><span class="tx">Frame - F2</span></div>
<div class="exp" style="left:23px;top:257px"><i></i></div>
<div class="tico" style="left:36px;top:253px"><svg width="16" height="16" viewBox="0 0 16 16"><rect x="1.5" y="2.5" width="13" height="11" fill="#e9a800" stroke="#b07800"/><rect x="4" y="5" width="3" height="6" fill="#ececff" stroke="#553" stroke-width="0.8"/><rect x="9" y="5" width="3" height="6" fill="#ececff" stroke="#553" stroke-width="0.8"/></svg></div>
<div class="trow" style="left:53px;top:252px;"><span class="tx">004.Componenta 004</span></div>
<div class="exp" style="left:41px;top:275px"><i></i></div>
<div class="tico" style="left:54px;top:271px"><svg width="16" height="16" viewBox="0 0 16 16"><path d="M4.5 1.5Q2.5 1.5 2.5 4V13.5H5.5V1.5M2.5 5.5H5.5M2.5 8.5H5.5M2.5 11H5.5M5.5 9.5H13.5V13.5H5.5M13.5 8V14.5M11.5 9.5V13.5M8 11.5V13.5M2.5 13.5L3.5 14.5M5.5 13.5L4.5 14.5" fill="none" stroke="#3030d0" stroke-width="1"/></svg></div>
<div class="trow" style="left:71px;top:270px;"><span class="tx">Frame</span></div>
<div class="tico" style="left:72px;top:289px"><svg width="16" height="16" viewBox="0 0 16 16"><path d="M1 5.5H15L11.5 10.5H4.5Z" fill="none" stroke="#3030d0" stroke-width="1"/></svg></div>
<div class="trow" style="left:89px;top:288px;"><span class="tx">Side - Down</span></div>
<div class="tico" style="left:72px;top:307px"><svg width="16" height="16" viewBox="0 0 16 16"><path d="M1 5.5H15L11.5 10.5H4.5Z" fill="none" stroke="#3030d0" stroke-width="1"/></svg></div>
<div class="trow" style="left:89px;top:306px;"><span class="tx">Side - Left</span></div>
<div class="tico" style="left:72px;top:325px"><svg width="16" height="16" viewBox="0 0 16 16"><path d="M1 5.5H15L11.5 10.5H4.5Z" fill="none" stroke="#3030d0" stroke-width="1"/></svg></div>
<div class="trow" style="left:89px;top:324px;"><span class="tx">Side - Right</span></div>
<div class="tico" style="left:72px;top:343px"><svg width="16" height="16" viewBox="0 0 16 16"><path d="M1 5.5H15L11.5 10.5H4.5Z" fill="none" stroke="#3030d0" stroke-width="1"/></svg></div>
<div class="trow" style="left:89px;top:342px;"><span class="tx">Side - Up</span></div>
<div class="exp" style="left:59px;top:365px"><i></i></div>
<div class="tico" style="left:72px;top:361px"><svg width="16" height="16" viewBox="0 0 16 16"><path d="M2.5 1.5H6.5V3.5H4.5V6.5H8.5V8.5H13.5V14H11.5V12.5H9.5V10.5H2.5Z" fill="none" stroke="#3030d0" stroke-width="1"/><path d="M4.5 8.5V10.5M6.5 6.5V8.5" stroke="#3030d0" stroke-width="1"/></svg></div>
<div class="trow" style="left:89px;top:360px;"><span class="tx">Wing - A</span></div>
<div class="tico" style="left:90px;top:379px"><svg width="16" height="16" viewBox="0 0 16 16"><rect x="2.5" y="2.5" width="11" height="11" rx="1" fill="#eef4ff" stroke="#4a78d0"/><path d="M5 7L7 5M6 10L10 6M9 11L11 9" stroke="#9db9ea" stroke-width="0.8"/></svg></div>
<div class="trow" style="left:107px;top:378px;width:79px"><span class="tx sel">Glass - A</span></div>
<div class="tico" style="left:90px;top:397px"><svg width="16" height="16" viewBox="0 0 16 16"><path d="M1 5.5H15L11.5 10.5H4.5Z" fill="none" stroke="#3030d0" stroke-width="1"/></svg></div>
<div class="trow" style="left:107px;top:396px;"><span class="tx">Side - Down</span></div>
<div class="tico" style="left:90px;top:415px"><svg width="16" height="16" viewBox="0 0 16 16"><path d="M1 5.5H15L11.5 10.5H4.5Z" fill="none" stroke="#3030d0" stroke-width="1"/></svg></div>
<div class="trow" style="left:107px;top:414px;"><span class="tx">Side - Left</span></div>
<div class="tico" style="left:90px;top:433px"><svg width="16" height="16" viewBox="0 0 16 16"><path d="M1 5.5H15L11.5 10.5H4.5Z" fill="none" stroke="#3030d0" stroke-width="1"/></svg></div>
<div class="trow" style="left:107px;top:432px;"><span class="tx">Side - Right</span></div>
<div class="tico" style="left:90px;top:451px"><svg width="16" height="16" viewBox="0 0 16 16"><path d="M1 5.5H15L11.5 10.5H4.5Z" fill="none" stroke="#3030d0" stroke-width="1"/></svg></div>
<div class="trow" style="left:107px;top:450px;"><span class="tx">Side - Up</span></div>
</div>
</div>
<div id="doc">
<div class="dt">Ra Workshop New Project<svg class="abs" style="left:742px;top:6px" width="9" height="9" viewBox="0 0 9 9"><path d="M1 1L8 8M8 1L1 8" stroke="#000" stroke-width="1.7"/></svg></div>
<div class="l1"></div><div class="l2"></div>
<div class="inner">
<div class="dock"><div class="abs" style="left:0;top:0;right:0;height:3px;background:#fff"></div></div>
<div class="tb" style="left:3px;top:3px;width:71px;"><div class="grip"></div><div class="abs" style="left:8px;top:1px;width:24px;height:22px;border:1px solid #00007f;background:linear-gradient(180deg,#ffc794 0%,#ffb06a 50%,#ff9e4a 100%)"></div><div class="ti" style="left:12px;top:3px"><svg width="16" height="16" viewBox="0 0 16 16"><path d="M3.8 0.8V13.2L6.8 10.4L9 15.4L11 14.5L8.8 9.6H12.6Z" fill="#eef3fa" stroke="#5b7da8" stroke-width="1" stroke-linejoin="round"/></svg></div><div class="ti" style="left:37px;top:4px"><svg width="16" height="16" viewBox="0 0 16 16"><g fill="#f4d76e" stroke="#a8892a" stroke-width="0.7" stroke-linejoin="round"><path d="M5.8 10.6L2.6 7.4C1.8 6.6 2.8 5.6 3.6 6.2L5.8 8"/><rect x="5.5" y="2.6" width="1.9" height="7" rx="0.9"/><rect x="7.3" y="1.4" width="1.9" height="8" rx="0.9"/><rect x="9.1" y="2" width="1.9" height="7.6" rx="0.9"/><rect x="10.9" y="3.6" width="1.8" height="6.4" rx="0.9"/><path d="M5.5 7.6H12.7V11C12.7 13.4 11.2 14.8 9 14.8C7 14.8 5.8 13.8 4.6 11.8L3.4 9.4L5.5 9.8Z" stroke="none"/><path d="M12.7 9V11C12.7 13.4 11.2 14.8 9 14.8C7 14.8 5.8 13.8 4.6 11.8L3 8.6" fill="none"/></g></svg></div><div class="ovf"></div></div>
<div class="tb" style="left:76px;top:3px;width:228px;"><div class="grip"></div><div class="ti" style="left:168px;top:4px"><svg width="16" height="16" viewBox="0 0 16 16"><path d="M5 6.4C8 2.4 14 3.6 13.4 8.6C13 11.6 10.6 13.6 8.8 14.4" fill="none" stroke="#4a86e8" stroke-width="2.2" stroke-linecap="round"/><path d="M2 3.4L2.6 9.4L8 7Z" fill="#4a86e8"/></svg></div><div class="ti" style="left:192px;top:4px"><svg width="16" height="16" viewBox="0 0 16 16"><path d="M11 6.4C8 2.4 2 3.6 2.6 8.6C3 11.6 5.4 13.6 7.2 14.4" fill="none" stroke="#c0c0c4" stroke-width="2.2" stroke-linecap="round"/><path d="M14 3.4L13.4 9.4L8 7Z" fill="#c0c0c4"/></svg></div><div class="ovf"></div></div>
<div class="tb" style="left:307px;top:3px;width:292px;"><div class="grip"></div><div class="ti" style="left:12px;top:3px"><svg width="16" height="17" viewBox="0 0 16 17"><path d="M10.6 10.6L15 16" stroke="#8a6a18" stroke-width="2.6" stroke-linecap="round"/><path d="M10.6 10.6L15 16" stroke="#f0c84a" stroke-width="1.5" stroke-linecap="round"/><circle cx="7.2" cy="5.8" r="5.2" fill="url(#gLens)" stroke="#7e93ad" stroke-width="1.2"/><rect x="0.6" y="9.6" width="7.4" height="7" fill="#e8eef8" stroke="#6f81a6" stroke-width="0.9"/><path d="M2.2 13.1H6.4M4.3 11V15.2" stroke="#111" stroke-width="1.1"/></svg></div><div class="ti" style="left:36px;top:3px"><svg width="16" height="17" viewBox="0 0 16 17"><path d="M10.6 10.6L15 16" stroke="#8a6a18" stroke-width="2.6" stroke-linecap="round"/><path d="M10.6 10.6L15 16" stroke="#f0c84a" stroke-width="1.5" stroke-linecap="round"/><circle cx="7.2" cy="5.8" r="5.2" fill="url(#gLens)" stroke="#7e93ad" stroke-width="1.2"/><rect x="0.6" y="9.6" width="7.4" height="7" fill="#e8eef8" stroke="#6f81a6" stroke-width="0.9"/><path d="M2.2 13.1H6.4" stroke="#111" stroke-width="1.1"/></svg></div><div class="ti" style="left:60px;top:3px"><svg width="16" height="17" viewBox="0 0 16 17"><path d="M10.6 10.6L15 16" stroke="#8a6a18" stroke-width="2.6" stroke-linecap="round"/><path d="M10.6 10.6L15 16" stroke="#f0c84a" stroke-width="1.5" stroke-linecap="round"/><circle cx="7.2" cy="5.8" r="5.2" fill="url(#gLens)" stroke="#7e93ad" stroke-width="1.2"/><rect x="0.6" y="9.6" width="7.4" height="7" fill="#e8eef8" stroke="#6f81a6" stroke-width="0.9"/><path d="M3 12C3 10.6 5.6 10.6 5.6 12C5.6 13 4.3 13 4.3 14" stroke="#223" stroke-width="0.9" fill="none"/><rect x="3.8" y="14.8" width="1" height="1" fill="#223"/></svg></div><div class="ti" style="left:84px;top:3px"><svg width="16" height="16" viewBox="0 0 16 16"><path d="M11.5 1V16M14 1V16M1 11.5H15.5M1 14.5H15.5M9 4.5H15.5M9 8H15.5M3 10V16M6 10V16M8.8 10V16" stroke="#4a7ad4" stroke-width="0.9" fill="none"/><path d="M9 10L14 15.4" stroke="#8a6a18" stroke-width="2.6" stroke-linecap="round"/><path d="M9 10L14 15.4" stroke="#f0c84a" stroke-width="1.5" stroke-linecap="round"/><circle cx="5.4" cy="6.2" r="5" fill="url(#gLens)" stroke="#7e93ad" stroke-width="1.2"/></svg></div><div class="ti" style="left:108px;top:3px"><svg width="16" height="17" viewBox="0 0 16 17"><path d="M1.2 10.5L3.4 16.4L8 11.6" stroke="#2a55ee" stroke-width="1.1" stroke-dasharray="1.2 1.2" fill="none"/><path d="M10 11L14.6 16" stroke="#8a6a18" stroke-width="2.6" stroke-linecap="round"/><path d="M10 11L14.6 16" stroke="#f0c84a" stroke-width="1.5" stroke-linecap="round"/><circle cx="6.3" cy="7.2" r="5" fill="url(#gLens)" stroke="#7e93ad" stroke-width="1.2"/></svg></div><div class="ti" style="left:132px;top:3px"><svg width="16" height="17" viewBox="0 0 16 17"><rect x="0.8" y="2" width="13.4" height="13.4" fill="none" stroke="#1438f0" stroke-width="1.3" stroke-dasharray="2.4 1.6"/><path d="M10 11L14.6 16" stroke="#8a6a18" stroke-width="2.6" stroke-linecap="round"/><path d="M10 11L14.6 16" stroke="#f0c84a" stroke-width="1.5" stroke-linecap="round"/><circle cx="6.2" cy="7.4" r="5" fill="url(#gLens)" stroke="#7e93ad" stroke-width="1.2"/></svg></div><div class="abs" style="left:159px;top:7px"><svg width="10" height="10" viewBox="0 0 10 10"><rect x="0.5" y="0.5" width="9" height="9" rx="1" fill="#eef3fb" stroke="#8fa5c8"/><path d="M2.5 5H7.5M5 2.5V7.5" stroke="#223" stroke-width="1"/></svg></div><div class="combo" style="left:179px;top:2px;width:71px;height:20px;line-height:20px;padding-left:5px">100%<div class="cb"></div></div><div class="abs" style="left:259px;top:7px"><svg width="10" height="10" viewBox="0 0 10 10"><rect x="0.5" y="0.5" width="9" height="9" rx="1" fill="#eef3fb" stroke="#8fa5c8"/><path d="M2.5 5H7.5" stroke="#223" stroke-width="1"/></svg></div><div class="ovf"></div></div>
<div class="tb" style="left:3px;top:28px;width:615px;height:22px;"><div class="grip g3"></div><span class="tlabel" style="left:11px;top:4px">Draw</span><div class="combo" style="left:43px;top:1px;width:377px;height:20px;line-height:20px;padding-left:4px">Symbols and windows <span class="abs" style="left:197px;top:0">Base</span><div class="cb"></div></div><span class="tlabel" style="left:426px;top:4px">View</span><div class="combo" style="left:456px;top:1px;width:140px;height:20px;line-height:20px;padding-left:4px">Inside<div class="cb"></div></div><div class="ovf" style="height:21px"></div></div>
<div class="abs" style="left:5px;top:49px;width:599px;height:1px;background:#8f8da9"></div>
<div class="abs" style="left:0px;top:50px;width:153px;height:500px;overflow:hidden">
<div class="tbox" style="left:13px;top:4px;width:129px;height:22px;line-height:23px"><span style="position:absolute;left:0;width:111px;text-align:center">Shapes</span><span class="chev" style="left:113px;top:7px"><svg width="8" height="9" viewBox="0 0 9 10"><path d="M1 4.5L4.5 1L8 4.5M1 9L4.5 5.5L8 9" fill="none" stroke="#000" stroke-width="1.5"/></svg></span></div>
<div class="tgrp" style="left:13px;top:25px;width:129px;height:71px"></div>
<div class="xi" style="left:24px;top:34px"><svg width="16" height="16" viewBox="0 0 16 16" style="overflow:visible"><rect x="3" y="2" width="9" height="10" fill="#fff" stroke="url(#gBlu)" stroke-width="2"/></svg></div>
<div class="xi" style="left:46px;top:34px"><svg width="16" height="16" viewBox="0 0 16 16" style="overflow:visible"><path d="M2.8 12.2V4L5.2 1H9.8L12.2 4V12.2Z" fill="#fff" stroke="url(#gGry)" stroke-width="1.6"/></svg></div>
<div class="xi" style="left:68px;top:34px"><svg width="16" height="16" viewBox="0 0 16 16" style="overflow:visible"><path d="M2.8 12.2V4L5.2 1H9.8L12.2 4V12.2Z" fill="#fff" stroke="url(#gGry)" stroke-width="1.6"/><rect x="7.4" y="7" width="7.6" height="7.6" rx="1" fill="#cfcfcf" stroke="#b4b4b4" stroke-width="0.7"/><text x="11.2" y="13.4" font-size="7.5" font-family="Liberation Sans, sans-serif" font-weight="bold" fill="#8a8a8a" text-anchor="middle">2</text></svg></div>
<div class="xi" style="left:90px;top:34px"><svg width="16" height="16" viewBox="0 0 16 16" style="overflow:visible"><path d="M2.8 12.2V4L5.2 1H9.8L12.2 4V12.2Z" fill="#fff" stroke="url(#gGry)" stroke-width="1.6"/></svg></div>
<div class="xi" style="left:112px;top:34px"><svg width="16" height="16" viewBox="0 0 16 16" style="overflow:visible"><path d="M2.8 12.2V4L5.2 1H9.8L12.2 4V12.2Z" fill="#fff" stroke="url(#gGry)" stroke-width="1.6"/></svg></div>
<div class="xi" style="left:24px;top:54px"><svg width="16" height="16" viewBox="0 0 16 16" style="overflow:visible"><path d="M1.8 2.6V12.2H12.4Z" fill="#fff" stroke="url(#gGry)" stroke-width="1.7"/></svg></div>
<div class="xi" style="left:46px;top:54px"><svg width="16" height="16" viewBox="0 0 16 16" style="overflow:visible"><path d="M12.2 2.6V12.2H1.6Z" fill="#fff" stroke="url(#gGry)" stroke-width="1.7"/></svg></div>
<div class="xi" style="left:68px;top:54px"><svg width="16" height="16" viewBox="0 0 16 16" style="overflow:visible"><path d="M1.8 2.8H9L12.6 11.2H1.8Z" fill="#fff" stroke="url(#gGry)" stroke-width="1.7"/></svg></div>
<div class="xi" style="left:90px;top:54px"><svg width="16" height="16" viewBox="0 0 16 16" style="overflow:visible"><path d="M1.8 2.8H9L12.6 11.2H1.8Z" fill="#fff" stroke="url(#gGry)" stroke-width="1.7"/></svg></div>
<div class="xi" style="left:112px;top:54px"><svg width="16" height="16" viewBox="0 0 16 16" style="overflow:visible"><path d="M1.8 2.8H9L12.6 11.2H1.8Z" fill="#fff" stroke="url(#gGry)" stroke-width="1.7"/></svg></div>
<div class="xi" style="left:24px;top:74px"><svg width="16" height="16" viewBox="0 0 16 16" style="overflow:visible"><path d="M1.8 12.2V6.4L12.2 2.4V12.2Z" fill="#fff" stroke="url(#gGry)" stroke-width="1.7"/></svg></div>
<div class="xi" style="left:46px;top:74px"><svg width="16" height="16" viewBox="0 0 16 16" style="overflow:visible"><rect x="1" y="2" width="12" height="10.4" fill="#d6d6d6" stroke="#a2a2a2" stroke-width="1"/><path d="M5 10.4V6L6 5H8L9 6V10.4Z" fill="#e8e8e8" stroke="#a0a0a0" stroke-width="0.9"/></svg></div>
<div class="xi" style="left:68px;top:74px"><svg width="16" height="16" viewBox="0 0 16 16" style="overflow:visible"><path d="M0.8 9.6V3.6L4.6 0.4L8 3.4H12.6V10.4" fill="#fff" stroke="url(#gGry)" stroke-width="1.6"/><path d="M0.8 9.6H3.6L5 11.4" fill="none" stroke="url(#gGry)" stroke-width="1.4"/><rect x="6.8" y="7.6" width="7.6" height="7.6" rx="1" fill="#cfcfcf" stroke="#b4b4b4" stroke-width="0.7"/><text x="10.6" y="14.0" font-size="7.5" font-family="Liberation Sans, sans-serif" font-weight="bold" fill="#8a8a8a" text-anchor="middle">!</text></svg></div>
<div class="tbox" style="left:13px;top:101px;width:129px;height:22px;line-height:23px"><span style="position:absolute;left:0;width:111px;text-align:center">Splitters</span><span class="chev" style="left:113px;top:7px"><svg width="8" height="9" viewBox="0 0 9 10"><path d="M1 4.5L4.5 1L8 4.5M1 9L4.5 5.5L8 9" fill="none" stroke="#000" stroke-width="1.5"/></svg></span></div>
<div class="tgrp" style="left:13px;top:122px;width:129px;height:51px"></div>
<div class="xi" style="left:24px;top:131px"><svg width="16" height="16" viewBox="0 0 16 16" style="overflow:visible"><rect x="0" y="0" width="14" height="14" fill="url(#gBlu)"/><rect x="2" y="2" width="4.4" height="10" fill="#fff"/><rect x="7.8" y="2" width="4.2" height="10" fill="#fff"/></svg></div>
<div class="xi" style="left:46px;top:131px"><svg width="16" height="16" viewBox="0 0 16 16" style="overflow:visible"><rect x="0" y="0" width="14" height="14" fill="url(#gBlu)"/><rect x="2" y="2" width="10" height="4.2" fill="#fff"/><rect x="2" y="7.8" width="10" height="4.2" fill="#fff"/></svg></div>
<div class="xi" style="left:68px;top:131px"><svg width="16" height="16" viewBox="0 0 16 16" style="overflow:visible"><rect x="0" y="0" width="14" height="14" fill="url(#gBlu)"/><rect x="2" y="2" width="2.4" height="10" fill="#fff"/><rect x="5.8" y="2" width="2.4" height="10" fill="#fff"/><rect x="9.6" y="2" width="2.4" height="10" fill="#fff"/></svg></div>
<div class="xi" style="left:90px;top:131px"><svg width="16" height="16" viewBox="0 0 16 16" style="overflow:visible"><path d="M8 1.6C1.4 1.6 1.4 12.4 8 12.4" fill="none" stroke="#8e8e8e" stroke-width="1.4"/><path d="M8.2 -1V15" stroke="#8e8e8e" stroke-width="1.1"/></svg></div>
<div class="xi" style="left:112px;top:131px"><svg width="16" height="16" viewBox="0 0 16 16" style="overflow:visible"><ellipse cx="7" cy="7" rx="5.4" ry="5.6" fill="none" stroke="#8e8e8e" stroke-width="1.4"/><path d="M7 -1V15" stroke="#8e8e8e" stroke-width="1.1"/></svg></div>
<div class="xi" style="left:24px;top:151px"><svg width="16" height="16" viewBox="0 0 16 16" style="overflow:visible"><rect x="1.4" y="1.4" width="11.2" height="10" fill="#fff" stroke="#5a7ab8" stroke-width="0.8"/><rect x="1" y="1" width="12" height="1.8" fill="#5f8ae8"/><path d="M2 5.6H12M2 8.4H12M4.6 3.4V10.6M7.4 3.4V10.6M10 3.4V10.6" stroke="#2a5af0" stroke-width="1"/><path d="M1 11.8H13" stroke="#28406e" stroke-width="0.9"/></svg></div>
<div class="xi" style="left:46px;top:151px"><svg width="16" height="16" viewBox="0 0 16 16" style="overflow:visible"><rect x="0.8" y="0.8" width="12.4" height="12.4" fill="#fff" stroke="url(#gGry)" stroke-width="1.6"/><path d="M0.8 6.6H6.6M6.6 13V6.6L12.8 0.8" fill="none" stroke="url(#gGry)" stroke-width="1.3"/><rect x="7" y="7.2" width="7.6" height="7.6" rx="1" fill="#cfcfcf" stroke="#b4b4b4" stroke-width="0.7"/><text x="10.8" y="13.600000000000001" font-size="7.5" font-family="Liberation Sans, sans-serif" font-weight="bold" fill="#8a8a8a" text-anchor="middle">!</text></svg></div>
<div class="tbox" style="left:13px;top:178px;width:129px;height:22px;line-height:23px"><span style="position:absolute;left:0;width:111px;text-align:center">Wings</span><span class="chev" style="left:113px;top:7px"><svg width="8" height="9" viewBox="0 0 9 10"><path d="M1 4.5L4.5 1L8 4.5M1 9L4.5 5.5L8 9" fill="none" stroke="#000" stroke-width="1.5"/></svg></span></div>
<div class="tgrp" style="left:13px;top:199px;width:129px;height:91px"></div>
<div class="xi" style="left:24px;top:208px"><svg width="16" height="16" viewBox="0 0 16 16" style="overflow:visible"><rect x="1" y="0" width="12" height="14" fill="url(#gBlu)"/><rect x="2.4" y="2.4" width="7.2" height="9.2" fill="#fff"/><path d="M2.4 3.4L8.6 7L2.4 10.6" fill="none" stroke="#3b50b4" stroke-width="1.7"/></svg></div>
<div class="xi" style="left:46px;top:208px"><svg width="16" height="16" viewBox="0 0 16 16" style="overflow:visible"><rect x="1" y="0" width="12" height="14" fill="url(#gBlu)"/><rect x="3.4" y="2.4" width="7.2" height="9.2" fill="#fff"/><path d="M4.4 11.6L7 2.4L9.6 11.6" fill="none" stroke="#3b50b4" stroke-width="1.7"/></svg></div>
<div class="xi" style="left:68px;top:208px"><svg width="16" height="16" viewBox="0 0 16 16" style="overflow:visible"><rect x="1" y="0" width="12" height="14" fill="url(#gBlu)"/><rect x="3.4" y="2.4" width="7.2" height="9.2" fill="#fff"/><path d="M4.4 11.6L7 2.4L9.6 11.6M10.6 3L4 7L10.6 11" fill="none" stroke="#3b50b4" stroke-width="1.1"/></svg></div>
<div class="xi" style="left:90px;top:208px"><svg width="16" height="16" viewBox="0 0 16 16" style="overflow:visible"><rect x="0" y="1" width="14" height="12" fill="url(#gBlu)"/><rect x="2" y="3" width="4.4" height="8" fill="#fff"/><rect x="7.6" y="3" width="4.4" height="8" fill="#fff"/><path d="M2 3L6.4 7L2 11M12 3L7.6 7L12 11" fill="none" stroke="#3b50b4" stroke-width="1.1"/></svg></div>
<div class="xi" style="left:112px;top:208px"><svg width="16" height="16" viewBox="0 0 16 16" style="overflow:visible"><rect x="0" y="1" width="14" height="12" fill="url(#gBlu)"/><rect x="2" y="3" width="4.4" height="8" fill="#fff"/><rect x="7.6" y="3" width="4.4" height="8" fill="#fff"/><path d="M2 11L4.2 3L6.4 11M2 3L6.4 7L2 11M12 3L7.6 7L12 11" fill="none" stroke="#3b50b4" stroke-width="1.1"/></svg></div>
<div class="xi" style="left:24px;top:228px"><svg width="16" height="16" viewBox="0 0 16 16" style="overflow:visible"><rect x="0" y="1" width="14" height="12" fill="url(#gBlu)"/><rect x="2" y="3" width="4.4" height="8" fill="#fff"/><rect x="7.6" y="3" width="4.4" height="8" fill="#fff"/><path d="M2 11L4.2 3L6.4 11M2 3L6.4 7L2 11M7.6 11L9.8 3L12 11M12 3L7.6 7L12 11" fill="none" stroke="#3b50b4" stroke-width="1.1"/></svg></div>
<div class="xi" style="left:46px;top:228px"><svg width="16" height="16" viewBox="0 0 16 16" style="overflow:visible"><rect x="0" y="0" width="14" height="14" fill="url(#gGry)"/><rect x="2" y="2" width="10" height="10" fill="#fff"/><path d="M2.4 7.6L7 2.6L11.6 7.6" fill="none" stroke="#8a8a8a" stroke-width="1.1"/><path d="M4 9.5H5M6.6 10.8H7.6M9 9.5H10" stroke="#8a8a8a" stroke-width="1"/></svg></div>
<div class="xi" style="left:68px;top:228px"><svg width="16" height="16" viewBox="0 0 16 16" style="overflow:visible"><rect x="0" y="0" width="14" height="14" fill="url(#gBlu)"/><rect x="2" y="2" width="10" height="10" fill="#fff"/><path d="M2 12L7 2" stroke="#3b50b4" stroke-width="1"/><path d="M3 6H7.4V3.4L11.6 7.2L7.4 11V8.6H3Z" fill="#3b50b4"/></svg></div>
<div class="xi" style="left:90px;top:228px"><svg width="16" height="16" viewBox="0 0 16 16" style="overflow:visible"><rect x="0" y="1" width="14" height="12" fill="url(#gBlu)"/><rect x="2" y="3" width="4.4" height="8" fill="#fff"/><rect x="7.6" y="3" width="4.4" height="8" fill="#fff"/><path d="M5.6 5L3.2 7L5.6 9M3.2 7H6M8.4 5L10.8 7L8.4 9M10.8 7H8" fill="none" stroke="#3b50b4" stroke-width="1.1"/></svg></div>
<div class="xi" style="left:112px;top:228px"><svg width="16" height="16" viewBox="0 0 16 16" style="overflow:visible"><rect x="-1" y="1" width="16" height="12.4" fill="url(#gGry)"/><rect x="2" y="2.6" width="5.4" height="9" fill="#fff"/><rect x="8.6" y="2.6" width="5.4" height="9" fill="#fff"/><path d="M2.6 7H7M9 7H13.4M4.8 4.6V9.4M11.2 4.6V9.4M3.4 5.4L6.2 8.6M6.2 5.4L3.4 8.6M9.8 5.4L12.6 8.6M12.6 5.4L9.8 8.6" stroke="#8a8a8a" stroke-width="0.7" fill="none"/></svg></div>
<div class="xi" style="left:24px;top:248px"><svg width="16" height="16" viewBox="0 0 16 16" style="overflow:visible"><rect x="0" y="1" width="14" height="12" fill="url(#gGry)"/><rect x="2" y="3" width="4.4" height="8" fill="#fff"/><rect x="7.6" y="3" width="4.4" height="8" fill="#fff"/><path d="M3 6L4.6 7L3 8M9 7H11M10 5.6V8.4" stroke="#8a8a8a" stroke-width="0.9" fill="none"/></svg></div>
<div class="xi" style="left:46px;top:248px"><svg width="16" height="16" viewBox="0 0 16 16" style="overflow:visible"><rect x="0" y="0" width="14" height="14" fill="url(#gBlu)"/><rect x="2" y="2" width="10" height="10" fill="#fff"/><path d="M3 6H7.4V3.4L11.6 7.2L7.4 11V8.6H3Z" fill="#3b50b4"/></svg></div>
<div class="xi" style="left:68px;top:248px"><svg width="16" height="16" viewBox="0 0 16 16" style="overflow:visible"><rect x="1" y="0" width="12" height="14" fill="url(#gGry)"/><rect x="2.6" y="2" width="6.8" height="4.4" fill="#fff"/><rect x="2.6" y="7.6" width="6.8" height="4.4" fill="#fff"/><path d="M4.4 4H7.6M6 3V5.4M4.4 9.8H7.6M5 9L4.2 9.8L5 10.6" stroke="#8a8a8a" stroke-width="0.8" fill="none"/></svg></div>
<div class="xi" style="left:90px;top:248px"><svg width="16" height="16" viewBox="0 0 16 16" style="overflow:visible"><rect x="2" y="-1" width="10" height="16" fill="url(#gBlu)"/><rect x="3.6" y="0.6" width="6.8" height="12.8" fill="#ced8fa"/><path d="M3.6 0.6L10.2 7L3.6 13.4" fill="none" stroke="#3b50b4" stroke-width="1"/></svg></div>
<div class="xi" style="left:112px;top:248px"><svg width="16" height="16" viewBox="0 0 16 16" style="overflow:visible"><rect x="0" y="-1" width="14" height="16" fill="url(#gBlu)"/><rect x="1.6" y="0.6" width="4.6" height="12.8" fill="#ced8fa"/><rect x="7.8" y="0.6" width="4.6" height="12.8" fill="#ced8fa"/><path d="M1.6 0.6L6.2 7L1.6 13.4M6.2 0.6L1.6 7L6.2 13.4M12.4 0.6L7.8 7L12.4 13.4M7.8 0.6L12.4 7L7.8 13.4" fill="none" stroke="#3b50b4" stroke-width="0.7"/></svg></div>
<div class="xi" style="left:24px;top:268px"><svg width="16" height="16" viewBox="0 0 16 16" style="overflow:visible"><rect x="1.4" y="1.4" width="11.2" height="10" fill="#fff" stroke="#5a7ab8" stroke-width="0.8"/><rect x="1" y="1" width="12" height="1.8" fill="#5f8ae8"/><rect x="4.6" y="4.4" width="4.8" height="6" fill="none" stroke="#2a5af0" stroke-width="1.2"/><path d="M4.6 7.4H9.4" stroke="#2a5af0" stroke-width="1"/><path d="M1 11.8H13" stroke="#28406e" stroke-width="0.9"/></svg></div>
<div class="tbox" style="left:13px;top:295px;width:129px;height:22px;line-height:23px"><span style="position:absolute;left:0;width:111px;text-align:center">Surfaces</span><span class="chev" style="left:113px;top:7px"><svg width="8" height="9" viewBox="0 0 9 10"><path d="M1 1L4.5 4.5L8 1M1 5.5L4.5 9L8 5.5" fill="none" stroke="#000" stroke-width="1.5"/></svg></span></div>
<div class="tbox" style="left:13px;top:321px;width:129px;height:22px;line-height:23px"><span style="position:absolute;left:0;width:111px;text-align:center">Georgian Bars</span><span class="chev" style="left:113px;top:7px"><svg width="8" height="9" viewBox="0 0 9 10"><path d="M1 1L4.5 4.5L8 1M1 5.5L4.5 9L8 5.5" fill="none" stroke="#000" stroke-width="1.5"/></svg></span></div>
<div class="tbox" style="left:13px;top:347px;width:129px;height:22px;line-height:23px"><span style="position:absolute;left:0;width:111px;text-align:center">Insect Screens</span><span class="chev" style="left:113px;top:7px"><svg width="8" height="9" viewBox="0 0 9 10"><path d="M1 4.5L4.5 1L8 4.5M1 9L4.5 5.5L8 9" fill="none" stroke="#000" stroke-width="1.5"/></svg></span></div>
<div class="tgrp" style="left:13px;top:368px;width:129px;height:31px"></div>
<div class="xi" style="left:24px;top:377px"><svg width="16" height="16" viewBox="0 0 16 16" style="overflow:visible"><rect x="1" y="1.6" width="12" height="8" fill="url(#pMesh)"/><path d="M0.8 14.6V2.4Q0.8 0.8 2.4 0.8H11.6Q13.2 0.8 13.2 2.4V14.6" fill="none" stroke="#8c8c8c" stroke-width="1.5"/><path d="M7 9.6V11.4" stroke="#8c8c8c" stroke-width="1"/></svg></div>
<div class="xi" style="left:46px;top:377px"><svg width="16" height="16" viewBox="0 0 16 16" style="overflow:visible"><rect x="0" y="0.6" width="14" height="14" fill="url(#pMesh)"/></svg></div>
<div class="xi" style="left:68px;top:377px"><svg width="16" height="16" viewBox="0 0 16 16" style="overflow:visible"><rect x="0.6" y="1.2" width="12.8" height="12.8" fill="url(#pMesh)" stroke="#9a9a9a" stroke-width="1.2"/></svg></div>
<div class="xi" style="left:90px;top:377px"><svg width="16" height="16" viewBox="0 0 16 16" style="overflow:visible"><rect x="-0.4" y="0" width="12.8" height="12.8" fill="url(#pMesh)" stroke="#9a9a9a" stroke-width="1.2"/><rect x="7" y="7.2" width="7.6" height="7.6" rx="1" fill="#cfcfcf" stroke="#b4b4b4" stroke-width="0.7"/><text x="10.8" y="13.600000000000001" font-size="7.5" font-family="Liberation Sans, sans-serif" font-weight="bold" fill="#8a8a8a" text-anchor="middle">!</text></svg></div>
<div class="tbox" style="left:13px;top:404px;width:129px;height:22px;line-height:23px"><span style="position:absolute;left:0;width:111px;text-align:center">Shutters</span><span class="chev" style="left:113px;top:7px"><svg width="8" height="9" viewBox="0 0 9 10"><path d="M1 4.5L4.5 1L8 4.5M1 9L4.5 5.5L8 9" fill="none" stroke="#000" stroke-width="1.5"/></svg></span></div>
<div class="tgrp" style="left:13px;top:425px;width:129px;height:31px"></div>
<div class="xi" style="left:24px;top:434px"><svg width="16" height="16" viewBox="0 0 16 16" style="overflow:visible"><rect x="0.8" y="0.8" width="12.4" height="7.4" fill="#a2a2a2"/><path d="M1.4 2.6H12.6" stroke="#fff" stroke-width="0.9"/><path d="M1.4 4.4H12.6" stroke="#fff" stroke-width="0.9"/><path d="M1.4 6.2H12.6" stroke="#fff" stroke-width="0.9"/><path d="M0.8 0.8V14.6M13.2 0.8V14.6" stroke="#9a9a9a" stroke-width="1.3"/><path d="M0.8 1H13.2" stroke="#8a8a8a" stroke-width="1.4"/></svg></div>
<div class="xi" style="left:46px;top:434px"><svg width="16" height="16" viewBox="0 0 16 16" style="overflow:visible"><rect x="1" y="1.6" width="12" height="11.4" rx="1.6" fill="#a6a6a6"/><path d="M2.4 3.6H6.2" stroke="#fff" stroke-width="0.9"/><path d="M2.4 5.6H6.2" stroke="#fff" stroke-width="0.9"/><path d="M2.4 7.6H6.2" stroke="#fff" stroke-width="0.9"/><path d="M2.4 9.6H6.2" stroke="#fff" stroke-width="0.9"/><path d="M2.4 11.4H6.2" stroke="#fff" stroke-width="0.9"/><path d="M7.8 3.6H11.6" stroke="#fff" stroke-width="0.9"/><path d="M7.8 5.6H11.6" stroke="#fff" stroke-width="0.9"/><path d="M7.8 7.6H11.6" stroke="#fff" stroke-width="0.9"/><path d="M7.8 9.6H11.6" stroke="#fff" stroke-width="0.9"/><path d="M7.8 11.4H11.6" stroke="#fff" stroke-width="0.9"/><path d="M0.4 4.6H1.6M0.4 10H1.6M12.4 4.6H13.6M12.4 10H13.6" stroke="#a6a6a6" stroke-width="1.6"/></svg></div>
<div class="xi" style="left:68px;top:434px"><svg width="16" height="16" viewBox="0 0 16 16" style="overflow:visible"><rect x="0.4" y="0.8" width="13.2" height="13" fill="url(#gGry)"/><path d="M2 3H6.2" stroke="#fff" stroke-width="0.9"/><path d="M2 5.2H6.2" stroke="#fff" stroke-width="0.9"/><path d="M2 7.4H6.2" stroke="#fff" stroke-width="0.9"/><path d="M2 9.6H6.2" stroke="#fff" stroke-width="0.9"/><path d="M2 11.8H6.2" stroke="#fff" stroke-width="0.9"/><path d="M7.8 3H12" stroke="#fff" stroke-width="0.9"/><path d="M7.8 5.2H12" stroke="#fff" stroke-width="0.9"/><path d="M7.8 7.4H12" stroke="#fff" stroke-width="0.9"/><path d="M7.8 9.6H12" stroke="#fff" stroke-width="0.9"/><path d="M7.8 11.8H12" stroke="#fff" stroke-width="0.9"/></svg></div>
<div class="xi" style="left:90px;top:434px"><svg width="16" height="16" viewBox="0 0 16 16" style="overflow:visible"><rect x="-0.6" y="-0.2" width="13.2" height="13" fill="url(#gGry)"/><path d="M1 2H5.2" stroke="#fff" stroke-width="0.9"/><path d="M1 4.2H5.2" stroke="#fff" stroke-width="0.9"/><path d="M1 6.4H5.2" stroke="#fff" stroke-width="0.9"/><path d="M1 8.6H5.2" stroke="#fff" stroke-width="0.9"/><path d="M1 10.8H5.2" stroke="#fff" stroke-width="0.9"/><path d="M6.8 2H11" stroke="#fff" stroke-width="0.9"/><path d="M6.8 4.2H11" stroke="#fff" stroke-width="0.9"/><path d="M6.8 6.4H11" stroke="#fff" stroke-width="0.9"/><rect x="7" y="7.2" width="7.6" height="7.6" rx="1" fill="#cfcfcf" stroke="#b4b4b4" stroke-width="0.7"/><text x="10.8" y="13.600000000000001" font-size="7.5" font-family="Liberation Sans, sans-serif" font-weight="bold" fill="#8a8a8a" text-anchor="middle">!</text></svg></div>
<div class="tbox" style="left:13px;top:461px;width:129px;height:22px;line-height:23px"><span style="position:absolute;left:0;width:111px;text-align:center">Misc</span><span class="chev" style="left:113px;top:7px"><svg width="8" height="9" viewBox="0 0 9 10"><path d="M1 4.5L4.5 1L8 4.5M1 9L4.5 5.5L8 9" fill="none" stroke="#000" stroke-width="1.5"/></svg></span></div>
<div class="tgrp" style="left:13px;top:482px;width:129px;height:34px"></div>
<div class="xi" style="left:24px;top:491px"><svg width="16" height="16" viewBox="0 0 16 16" style="overflow:visible"><path d="M1.2 9V1.2H6V9M3.6 1.2V9" stroke="#2a3aa8" stroke-width="1.8" fill="none"/><rect x="7.4" y="1.6" width="5" height="5.4" fill="#fff" stroke="#2a3aa8" stroke-width="1.8"/><path d="M5.6 4H8" stroke="#2a3aa8" stroke-width="1.6"/></svg></div>
<div class="xi" style="left:46px;top:491px"><svg width="16" height="16" viewBox="0 0 16 16" style="overflow:visible"><rect x="3.4" y="2" width="10" height="7.4" stroke="#2a4ae0" stroke-width="1.1" stroke-dasharray="2 1.2" fill="none"/></svg></div>
<div class="xi" style="left:68px;top:491px"><svg width="16" height="16" viewBox="0 0 16 16" style="overflow:visible"><rect x="0.6" y="0.8" width="13" height="12" stroke="#2a4ae0" stroke-width="1.1" stroke-dasharray="2 1.2" fill="none"/></svg></div>
<div class="xi" style="left:90px;top:491px"><svg width="16" height="16" viewBox="0 0 16 16" style="overflow:visible"><rect x="0.6" y="2" width="13" height="12" stroke="#2a4ae0" stroke-width="1.1" stroke-dasharray="2 1.2" fill="none"/><rect x="0.6" y="0.6" width="13" height="2.4" fill="url(#gBlu)"/></svg></div>
<div class="xi" style="left:112px;top:491px"><svg width="16" height="16" viewBox="0 0 16 16" style="overflow:visible"><rect x="1" y="0.8" width="13" height="12" stroke="#2a4ae0" stroke-width="1.1" stroke-dasharray="2 1.2" fill="none"/><rect x="0.2" y="0.6" width="2.6" height="12" fill="#5c78dc"/></svg></div>
</div>
<div class="abs" style="left:153px;top:50px;width:17px;height:500px;background:#f0f0f0"><div class="abs" style="left:0px;top:17px;width:15px;height:434px;background:#cdcdcd"></div><svg class="abs" style="left:4px;top:489px" width="9" height="6" viewBox="0 0 9 6"><path d="M0.7 0.7L4.5 4.7L8.3 0.7" fill="none" stroke="#505050" stroke-width="1.4"/></svg></div>
<div class="abs" style="left:170px;top:50px;width:3px;height:500px;background-image:linear-gradient(180deg,#909090 50%,#fff 50%);background-size:3px 2px;border-left:1px solid #b0b0b0;border-right:1px solid #b0b0b0"></div>
<svg class="abs" style="left:173px;top:50px" width="582" height="500" viewBox="371 154 582 500" font-family="Liberation Sans, sans-serif"><path d="M422.95 154V654M473.80 154V654M524.65 154V654M575.50 154V654M626.35 154V654M677.20 154V654M728.05 154V654M778.90 154V654M829.75 154V654M880.60 154V654M931.45 154V654" stroke="rgba(100,100,230,0.3)" stroke-width="1" fill="none"/><path d="M422.45 641.70H953M422.45 590.85H953M422.45 540.00H953M422.45 489.15H953M422.45 438.30H953M422.45 387.45H953M422.45 336.60H953M422.45 285.75H953M422.45 234.90H953M422.45 184.05H953" stroke="rgba(100,100,230,0.3)" stroke-width="1" fill="none"/><rect x="575.5" y="184" width="203.5" height="406.5" fill="#2a72b8" stroke="#858585" stroke-width="1.3"/><rect x="596.5" y="205" width="161.5" height="364.5" fill="#008000" stroke="#000" stroke-width="0.8"/><path d="M583.5 191.5H771.5V583.5" fill="none" stroke="#000" stroke-width="1"/><path d="M583.5 191.5V583.5H771.5" fill="none" stroke="#000" stroke-width="2"/><path d="M575.5 184L587.5 196M779 184L758 205M575.5 590.5L596.5 569.5M779 590.5L758 569.5" stroke="#000" stroke-width="1" fill="none"/><rect x="587.5" y="195.5" width="10" height="10" fill="none" stroke="#000" stroke-width="1"/><rect x="757.5" y="195.5" width="10" height="10" fill="none" stroke="#000" stroke-width="1"/><rect x="587.5" y="569.5" width="10" height="10" fill="none" stroke="#000" stroke-width="1"/><rect x="757.5" y="569.5" width="10" height="10" fill="none" stroke="#000" stroke-width="1"/><path d="M771 191.5L591 321V451.5L771 583.5" fill="none" stroke="#1212e6" stroke-width="1.2" stroke-dasharray="8 3.5"/><rect x="769.5" y="224" width="3" height="18" rx="1" fill="#ddd" stroke="#999" stroke-width="0.5"/><rect x="769.5" y="379" width="3" height="18" rx="1" fill="#ddd" stroke="#999" stroke-width="0.5"/><rect x="769.5" y="533" width="3" height="18" rx="1" fill="#ddd" stroke="#999" stroke-width="0.5"/><rect x="575.5" y="346" width="17" height="82" fill="#fff" fill-opacity="0.62"/><text transform="translate(587,387) rotate(-90)" text-anchor="middle" font-size="15.5" fill="#8a8a8a">H=1,835.0</text><rect x="588" y="379" width="4.5" height="16" rx="2" fill="#e4e4e4" stroke="#aaa" stroke-width="0.5"/><rect x="591" y="382.5" width="14" height="3" fill="#d8d8d8" stroke="#aaa" stroke-width="0.4"/><path d="M561.5 184V346M561.5 428V590.5M558 184.5H566M558 590.5H566" stroke="#000" stroke-width="1" fill="none"/><text transform="translate(565,387) rotate(-90)" text-anchor="middle" font-size="15.5" fill="#000">H=2,000.0</text><path d="M575.5 604.5H633M720 604.5H779M575.5 600V609M779.5 600V609" stroke="#000" stroke-width="1" fill="none"/><text x="676.5" y="610" text-anchor="middle" font-size="15.5" fill="#000">W=1,000.0</text><rect x="641" y="574.5" width="73" height="16" fill="#fff" fill-opacity="0.62"/><text x="677.5" y="588.5" text-anchor="middle" font-size="15.5" fill="#8a8a8a">W=835.0</text><text x="676.5" y="568.5" text-anchor="middle" font-size="20" font-weight="bold" fill="#000">A</text><rect x="616" y="474" width="123" height="13" fill="#fff" fill-opacity="0.62"/><text x="677.5" y="484.5" text-anchor="middle" font-size="11.5" fill="#0000cd">Without glass (24.0 mm)</text><rect x="380.5" y="631.5" width="81" height="21" rx="2" fill="#d9edf4" fill-opacity="0.9" stroke="#555" stroke-width="1"/><text x="421.5" y="646.8" text-anchor="middle" font-size="15.5" font-weight="bold" fill="#000">Inner view</text><path d="M576 583L580.5 587.5L576 592L571.5 587.5Z" fill="none" stroke="#b0b0b0" stroke-width="0.9"/><path d="M579.5 200.5H587.5M578.5 574.5H587.5M592.5 580V588.5M762.5 580V589" stroke="#000" stroke-width="1"/></svg>
</div>
<div class="tabs"><svg class="abs" style="left:0;top:-1px" width="757" height="20" viewBox="197 657 757 20" font-family="Liberation Sans, sans-serif" font-size="11"><path d="M200.5 658L217.5 674.5H268L273 670" fill="none" stroke="#4a4a4a" stroke-width="1"/><path d="M264 657.5L281 674.5H319Q322.5 674.5 322.5 671V657.5Z" fill="#fff" stroke="none"/><path d="M264 657.5L281 674.5H319Q322.5 674.5 322.5 671V657.5" fill="none" stroke="#3399ff" stroke-width="1"/><text x="222.5" y="670.5" fill="#000" letter-spacing="-0.3">Summary</text><text x="281" y="670.5" fill="#000" font-weight="bold" letter-spacing="-0.2">Design</text></svg></div>
</div>
<div class="panel" style="left:957px;top:80px;width:345px;height:598px">
<div class="hdr">Properties<span class="pin" style="left:315px"><svg width="8" height="10" viewBox="0 0 8 10"><path d="M2 0.7H6V5.3H2ZM0.3 5.5H7.7M4 5.5V10" stroke="#fff" stroke-width="1.3" fill="none"/><path d="M5.2 1V5" stroke="#fff" stroke-width="1.2"/></svg></span><span class="pin" style="left:329px;top:4px"><svg width="9" height="9" viewBox="0 0 9 9"><path d="M1 1L8 8M8 1L1 8" stroke="#fff" stroke-width="2.2" fill="none"/></svg></span></div>
<div class="ptb"><div class="abs" style="left:1px;top:1px;width:24px;height:22px;border:1px solid #00007f;background:linear-gradient(180deg,#ffc891 0%,#ffb06a 50%,#ff9d4c 100%)"></div><svg class="abs" style="left:5px;top:4px" width="17" height="17" viewBox="0 0 17 17"><rect x="0.8" y="0.6" width="6.4" height="6.4" rx="1" fill="#fff" stroke="#5a9adc" stroke-width="1.1"/><path d="M2.2 3.8000000000000003H5.8M4 2.0V5.6" stroke="#000" stroke-width="1.2"/><rect x="0.8" y="9.6" width="6.4" height="6.4" rx="1" fill="#fff" stroke="#5a9adc" stroke-width="1.1"/><path d="M2.2 12.8H5.8M4 11.0V14.6" stroke="#000" stroke-width="1.2"/><path d="M9 2.4H13" stroke="#333" stroke-width="1.1"/><path d="M9 13.4H13" stroke="#333" stroke-width="1.1"/><path d="M9 4.6H12M14 4.6H16.6M9 6.6H12M14 6.6H16.6M9 8.6H12M14 8.6H16.6M9 10.6H12M14 10.6H16.6M9 15.6H12M14 15.6H16.6" stroke="#4aa49a" stroke-width="0.9" stroke-dasharray="1.4 0.6"/></svg><svg class="abs" style="left:28px;top:4px" width="20" height="17" viewBox="0 0 20 17"><text x="0.4" y="7.4" font-family="Liberation Serif, serif" font-weight="bold" font-size="9.6" fill="#3a62b8">A</text><text x="0.8" y="15.6" font-family="Liberation Serif, serif" font-weight="bold" font-size="9.6" fill="#a83232">Z</text><path d="M14 0.6V13" stroke="#000" stroke-width="1.2"/><path d="M11.4 11L14 15.4L16.6 11Z" fill="#000"/></svg><div class="tsep" style="left:51px;top:4px;height:17px"></div><svg class="abs" style="left:60px;top:5px" width="16" height="15" viewBox="0 0 16 15"><rect x="0.5" y="0.5" width="15" height="13.6" fill="#c4c4c8" stroke="#a8a8ac"/><rect x="0.5" y="0.5" width="15" height="2.4" fill="#b0b0b4"/><path d="M2.6 6.4V4.6H6.4V6.4H13.4V11.8H2.6Z" fill="none" stroke="#dcdcde" stroke-width="0.9"/><path d="M4 8.2H5M6.4 8.2H10M4 10.2H5M6.4 10.2H10" stroke="#a0a0a4" stroke-width="0.8"/></svg></div>
<div class="pg" style="left:2px;top:43px;width:340px;height:545px">
<div class="pc" style="top:0px;height:21px;line-height:21px;border-top:none;">General information<span class="abs" style="left:312px;top:6px"><svg width="9" height="10" viewBox="0 0 9 10"><path d="M1 4.5L4.5 1L8 4.5M1 9L4.5 5.5L8 9" fill="none" stroke="#222" stroke-width="1.4"/></svg></span></div>
<div class="pr g" style="top:21px;height:17px;line-height:16px"><div class="n" style="padding-left:13px;">Name</div><div class="v">Glass - A</div></div>
<div class="pr g" style="top:38px;height:17px;line-height:16px"><div class="n" style="padding-left:13px;">Position</div><div class="v">A</div></div>
<div class="pr g" style="top:55px;height:17px;line-height:16px"><div class="n" style="padding-left:13px;">Reference</div><div class="v">F1.W.G</div></div>
<div class="pr" style="top:72px;height:20px;line-height:19px"><div class="n" style="padding-left:13px;">Panel type</div><div class="v b">Casement</div></div>
<div class="pr" style="top:92px;height:20px;line-height:19px"><div class="n" style="padding-left:13px;">Fixing mode</div><div class="v b">None</div></div>
<div class="pc" style="top:112px;height:22px;line-height:22px;">Geometry<span class="abs" style="left:312px;top:7px"><svg width="9" height="10" viewBox="0 0 9 10"><path d="M1 4.5L4.5 1L8 4.5M1 9L4.5 5.5L8 9" fill="none" stroke="#222" stroke-width="1.4"/></svg></span></div>
<div class="pr g" style="top:134px;height:17px;line-height:16px"><div class="n" style="padding-left:13px;">Geometric shape</div><div class="v">Rectangle</div></div>
<div class="pr g" style="top:151px;height:17px;line-height:16px"><div class="pexp" style="top:3px"></div><div class="n" style="padding-left:13px;">Parameters</div><div class="v"></div></div>
<div class="pr g" style="top:168px;height:17px;line-height:16px"><div class="n" style="padding-left:24px;">W</div><div class="v b r">821.0 mm</div></div>
<div class="pr g" style="top:185px;height:17px;line-height:16px"><div class="n" style="padding-left:24px;">H</div><div class="v b r">1,821.0 mm</div></div>
<div class="pr g" style="top:202px;height:17px;line-height:16px"><div class="n" style="padding-left:13px;">Perimeter</div><div class="v r">5,340.0 mm</div></div>
<div class="pr g" style="top:219px;height:17px;line-height:16px"><div class="n" style="padding-left:13px;">Surface</div><div class="v r">1.495 sqm</div></div>
<div class="pr" style="top:236px;height:17px;line-height:16px"><div class="n" style="padding-left:13px;">Tolerance</div><div class="v b r">7.0 mm</div></div>
<div class="pc" style="top:253px;height:22px;line-height:22px;">Materials<span class="abs" style="left:312px;top:7px"><svg width="9" height="10" viewBox="0 0 9 10"><path d="M1 4.5L4.5 1L8 4.5M1 9L4.5 5.5L8 9" fill="none" stroke="#222" stroke-width="1.4"/></svg></span></div>
<div class="pr" style="top:275px;height:20px;line-height:19px"><div class="n" style="padding-left:13px;">Material</div><div class="v b">Aluminum</div></div>
<div class="pr" style="top:295px;height:20px;line-height:19px"><div class="n" style="padding-left:13px;">Covered system</div><div class="v b">No</div></div>
<div class="pr" style="top:315px;height:20px;line-height:19px"><div class="n" style="padding-left:13px;">Profile System</div><div class="v b">PRD 2011.07</div></div>
<div class="pr" style="top:335px;height:20px;line-height:19px"><div class="n" style="padding-left:13px;">Color</div><div class="v b">5012</div></div>
<div class="pr" style="top:355px;height:20px;line-height:19px"><div class="n" style="padding-left:13px;">Fittings</div><div class="v b" style="letter-spacing:0.12px">Standard Fitting Plan for Hi...</div></div>
<div class="pr g" style="top:375px;height:17px;line-height:16px"><div class="n" style="padding-left:13px;">Profile - Code</div><div class="v"></div></div>
<div class="pr g" style="top:392px;height:17px;line-height:16px"><div class="pexp" style="top:3px"></div><div class="n" style="padding-left:13px;">Glass</div><div class="v">Cl-Cl 4/16/4</div></div>
<div class="pr" style="top:409px;height:20px;line-height:19px"><div class="n" style="padding-left:24px;">Use material</div><div class="v b">No</div></div>
<div class="pr" style="top:429px;height:20px;line-height:19px"><div class="n" style="padding-left:24px;">Glass Type</div><div class="v b">Glass</div></div>
<div class="pr" style="top:449px;height:20px;line-height:19px"><div class="n" style="padding-left:24px;background:#becbda;">Glass</div><div class="v b">Cl-Cl 4/16/4</div></div>
<div class="pr g" style="top:469px;height:17px;line-height:16px"><div class="n" style="padding-left:24px;">Name</div><div class="v">Clear-Clear 4-14-4</div></div>
<div class="pr g" style="top:486px;height:17px;line-height:16px"><div class="n" style="padding-left:24px;">Width</div><div class="v r">24.00</div></div>
<div class="pr g" style="top:503px;height:20px;line-height:19px"><div class="n" style="padding-left:24px;">Generate consumption</div><div class="v">Yes</div></div>
<div class="pr" style="top:523px;height:20px;line-height:19px"><div class="n" style="padding-left:13px;">Generate consumption</div><div class="v b">Yes</div></div>
<div class="abs" style="left:11px;right:0;top:543px;height:1px;background:#a0a0a0"></div>
</div></div>
<div class="panel" style="left:2px;top:680px;width:1300px;height:74px">
<div class="hdr">Output<span class="pin" style="left:1270px"><svg width="8" height="10" viewBox="0 0 8 10"><path d="M2 0.7H6V5.3H2ZM0.3 5.5H7.7M4 5.5V10" stroke="#fff" stroke-width="1.3" fill="none"/><path d="M5.2 1V5" stroke="#fff" stroke-width="1.2"/></svg></span><span class="pin" style="left:1284px;top:4px"><svg width="9" height="9" viewBox="0 0 9 9"><path d="M1 1L8 8M8 1L1 8" stroke="#fff" stroke-width="2.2" fill="none"/></svg></span></div>
<div class="grid" style="left:1px;top:18px;width:1296px;height:53px">
<div class="vl" style="left:99px;top:0;height:27px"></div>
<div class="vd" style="left:99px;top:27px;height:20px"></div>
<div class="vl" style="left:152px;top:0;height:27px"></div>
<div class="vd" style="left:152px;top:27px;height:20px"></div>
<div class="vl" style="left:624px;top:0;height:27px"></div>
<div class="vd" style="left:624px;top:27px;height:20px"></div>
<div class="vl" style="left:971px;top:0;height:27px"></div>
<div class="vd" style="left:971px;top:27px;height:20px"></div>
<div class="abs" style="left:0;top:46px;width:972px;height:1px;background:#a0a0a0"></div>
<span style="left:3px;top:7px">Date</span>
<svg class="abs" style="left:88px;top:10px" width="8" height="8" viewBox="0 0 8 8"><path d="M0.5 0.5H7.5M0.5 0.5L3.5 7" stroke="#9a9a9a" fill="none"/></svg>
<span style="left:104px;top:7px">Type</span>
<span style="left:156px;top:7px">Message</span>
<span style="left:628px;top:7px">Description</span>
<span style="left:3px;top:29px">21-Dec-15 9:40</span>
<span style="left:101px;top:29px;width:48px;text-align:right">0</span>
<span style="left:156px;top:29px">Object reference not set to an instance of an object.</span>
<span style="left:628px;top:29px">System.NullReferenceException: Object reference not set to an inst...</span>
</div></div>
<div class="panel" style="left:2px;top:756px;width:1300px;height:48px">
<div class="hdr">Results<span class="pin" style="left:1270px"><svg width="8" height="10" viewBox="0 0 8 10"><path d="M2 0.7H6V5.3H2ZM0.3 5.5H7.7M4 5.5V10" stroke="#fff" stroke-width="1.3" fill="none"/><path d="M5.2 1V5" stroke="#fff" stroke-width="1.2"/></svg></span><span class="pin" style="left:1284px;top:4px"><svg width="9" height="9" viewBox="0 0 9 9"><path d="M1 1L8 8M8 1L1 8" stroke="#fff" stroke-width="2.2" fill="none"/></svg></span></div>
<div class="grid" style="left:1px;top:18px;width:1296px;height:27px">
<div class="vl" style="left:19px;top:0;height:25px"></div>
<div class="vl" style="left:94px;top:0;height:25px"></div>
<div class="vl" style="left:215px;top:0;height:25px"></div>
<div class="vl" style="left:713px;top:0;height:25px"></div>
<span style="left:24px;top:7px">Component</span>
<svg class="abs" style="left:83px;top:10px" width="5" height="8" viewBox="0 0 5 8"><path d="M0.5 7L4 0.5" stroke="#9a9a9a" fill="none"/></svg>
<span style="left:98px;top:7px">Position</span>
<span style="left:219px;top:7px">Message</span>
<svg class="abs" style="left:1279px;top:2px" width="11" height="22" viewBox="0 0 11 22"><path d="M1.5 7L5.5 3L9.5 7M1.5 15L5.5 19L9.5 15" stroke="#505050" stroke-width="1.5" fill="none"/></svg>
</div></div>
<div id="status"><div class="sp" style="left:1px;width:837px"></div><span class="abs" style="left:5px;top:4px;line-height:15px">Ready</span>
<div class="sp" style="left:839px;width:174px;padding-left:4px">Exchange Rate: 1 $ = 0.6906 €</div>
<div class="sp" style="left:1014px;width:270px;padding-left:16px">Database: (local)\SQLEXPRESS\Ra:3.20.4.0-1-1.2<svg class="abs" style="left:4px;top:6px" width="8" height="7" viewBox="0 0 8 7"><path d="M0.7 3.5L3 5.8L7.3 0.8" stroke="#2a8a2a" stroke-width="1.4" fill="none"/></svg></div>
<svg class="abs" style="left:1288px;top:10px" width="11" height="11" viewBox="0 0 11 11"><g fill="#bdbdbd"><rect x="8" y="0" width="2" height="2"/><rect x="4" y="4" width="2" height="2"/><rect x="8" y="4" width="2" height="2"/><rect x="0" y="8" width="2" height="2"/><rect x="4" y="8" width="2" height="2"/><rect x="8" y="8" width="2" height="2"/></g></svg>
</div>
<div class="mshadow"></div>
<div id="ddm"><div class="top"></div><div class="strip"></div>
<div class="sep" style="top:91px"></div>
<div class="sep" style="top:138px"></div>
<div class="sep" style="top:163px"></div>
<div class="mic" style="top:5px"><svg width="16" height="16" viewBox="0 0 16 16"><rect x="0.8" y="2.6" width="14.4" height="11.4" fill="#f2f6fb" stroke="#6cb26c" stroke-width="1.3"/><rect x="2" y="3.8" width="12" height="9" fill="none" stroke="#c4d8c4" stroke-width="0.6"/><circle cx="11" cy="7.6" r="2.2" fill="#7f9fdc"/><path d="M9 11.5H13.6" stroke="#a8bce0" stroke-width="1"/><g transform="translate(1.4,3) scale(0.95)"><path d="M5.4 2.2C4.6 1 1.2 1 1.2 3.2C1.2 5.4 5.6 4.8 5.6 7.2C5.6 9.4 1.8 9.4 0.8 8" fill="none" stroke="#8f7210" stroke-width="1.7"/><path d="M2.4 0V10.4M4.2 0V10.4" stroke="#8f7210" stroke-width="0.8"/></g></svg></div>
<div class="it" style="top:5px;letter-spacing:-0.29px">Currencies...</div>
<div class="mic" style="top:27px"><svg width="16" height="16" viewBox="0 0 16 16"><rect x="0.8" y="2.6" width="14.4" height="11.4" fill="#f2f6fb" stroke="#6cb26c" stroke-width="1.3"/><rect x="2" y="3.8" width="12" height="9" fill="none" stroke="#c4d8c4" stroke-width="0.6"/><path d="M9 11.5H13.6" stroke="#a8bce0" stroke-width="1"/><g transform="translate(1.4,3) scale(0.95)"><path d="M5.4 2.2C4.6 1 1.2 1 1.2 3.2C1.2 5.4 5.6 4.8 5.6 7.2C5.6 9.4 1.8 9.4 0.8 8" fill="none" stroke="#8f7210" stroke-width="1.7"/><path d="M2.4 0V10.4M4.2 0V10.4" stroke="#8f7210" stroke-width="0.8"/></g><path d="M6.2 6.6L9.8 10.4L16 0.4" fill="none" stroke="#e8501e" stroke-width="2" stroke-linejoin="round"/></svg></div>
<div class="it" style="top:27px;letter-spacing:-0.25px">Reference Currency...</div>
<div class="mic" style="top:49px"><svg width="16" height="16" viewBox="0 0 16 16"><rect x="0.7" y="0.7" width="10.4" height="14.4" rx="1.4" fill="#e4ebf5" stroke="#6a7c9c" stroke-width="1"/><rect x="2.2" y="2" width="7.4" height="3" fill="#7aa2e4" stroke="#4a6eb0" stroke-width="0.5"/><g fill="#d23a3a"><rect x="2.2" y="6.4" width="1.8" height="1.8"/><rect x="5" y="6.4" width="1.8" height="1.8"/><rect x="7.8" y="6.4" width="1.8" height="1.8"/></g><g fill="#4a78d4"><rect x="2.2" y="9.2" width="1.8" height="1.8"/><rect x="5" y="9.2" width="1.8" height="1.8"/><rect x="7.8" y="9.2" width="1.8" height="1.8"/><rect x="2.2" y="12" width="1.8" height="1.8"/><rect x="5" y="12" width="1.8" height="1.8"/></g><g transform="translate(9.2,6.6) scale(0.95)"><path d="M5.4 2.2C4.6 1 1.2 1 1.2 3.2C1.2 5.4 5.6 4.8 5.6 7.2C5.6 9.4 1.8 9.4 0.8 8" fill="none" stroke="#8f7210" stroke-width="1.7"/><path d="M2.4 0V10.4M4.2 0V10.4" stroke="#8f7210" stroke-width="0.8"/></g></svg></div>
<div class="it" style="top:49px;letter-spacing:-0.34px">Currency Rate...</div>
<div class="mic" style="top:71px"><svg width="16" height="16" viewBox="0 0 16 16"><path d="M0.8 0.8V11.4H8.4Z" fill="#4a86e6" stroke="#2858b8" stroke-width="0.8"/><path d="M2.6 5.6V9.6H5.4Z" fill="#dbe7fa"/><circle cx="10.4" cy="7.2" r="4.6" fill="#f4f8ff" stroke="#6a7a98" stroke-width="1.1"/><rect x="9.4" y="0.6" width="2.2" height="1.8" fill="#555c6c"/><path d="M10.4 4.4V7.4H12.8" stroke="#111" stroke-width="1.1" fill="none"/><rect x="0.6" y="12.4" width="15" height="3" fill="#f0b824" stroke="#b88a10" stroke-width="0.6"/><path d="M3 12.6V14M5.5 12.6V14M8 12.6V14M10.5 12.6V14M13 12.6V14" stroke="#7a5a08" stroke-width="0.6"/></svg></div>
<div class="it" style="top:71px;letter-spacing:-0.09px">Measurement Unit...</div>
<div class="mic" style="top:96px"><svg width="16" height="16" viewBox="0 0 16 16"><g transform="translate(0.6,2.4)"><rect x="0.6" y="0.6" width="14" height="10.4" fill="#fbfcfe" stroke="#6886b8" stroke-width="1"/><circle cx="4.4" cy="3.9" r="2.1" fill="#3a2a22"/><path d="M1.6 9.8C1.6 6.4 7.2 6.4 7.2 9.8Z" fill="#e2601c"/><path d="M8.8 3.6H13M8.8 5.6H13M8.8 7.6H13" stroke="#6a96e0" stroke-width="0.9"/></g></svg></div>
<div class="it" style="top:96px;letter-spacing:-0.21px">Contacts...</div>
<div class="mic" style="top:118px"><svg width="16" height="16" viewBox="0 0 16 16"><g transform="scale(0.86)"><g transform="translate(0,0.4)"><rect x="0.6" y="0.6" width="14" height="10.4" fill="#fbfcfe" stroke="#6886b8" stroke-width="1"/><circle cx="4.4" cy="3.9" r="2.1" fill="#3a2a22"/><path d="M1.6 9.8C1.6 6.4 7.2 6.4 7.2 9.8Z" fill="#e2601c"/><path d="M8.8 3.6H13M8.8 5.6H13M8.8 7.6H13" stroke="#6a96e0" stroke-width="0.9"/></g><g transform="translate(4,4.6)"><rect x="0.6" y="0.6" width="14" height="10.4" fill="#fbfcfe" stroke="#6886b8" stroke-width="1"/><circle cx="4.4" cy="3.9" r="2.1" fill="#3a2a22"/><path d="M1.6 9.8C1.6 6.4 7.2 6.4 7.2 9.8Z" fill="#e2601c"/><path d="M8.8 3.6H13M8.8 5.6H13M8.8 7.6H13" stroke="#6a96e0" stroke-width="0.9"/></g></g></svg></div>
<div class="it" style="top:118px;letter-spacing:-0.17px">Contact Categories...</div>
<div class="mic" style="top:143px"><svg width="16" height="16" viewBox="0 0 16 16"><path d="M13.2 0.8C11.2 0.4 9.6 2.2 10.2 4.2L2 11.6C0.6 11.2 -0.2 13 0.8 14.2C2 15.4 3.8 14.8 3.6 13.2L11.8 5.8C13.8 6.4 15.6 4.8 15.2 2.8L13.4 4.4L11.6 2.6Z" fill="#cdd1d8" stroke="#5e626c" stroke-width="0.8" stroke-linejoin="round"/><path d="M0.8 1.6L2 0.6L8.6 7.4L7.4 8.6Z" fill="#e2e5ea" stroke="#5a5e68" stroke-width="0.7"/><path d="M6.6 8.6L8.8 6.4L15 12.4C16 13.6 14 15.8 12.6 14.6Z" fill="#f2ac1e" stroke="#8a5c08" stroke-width="0.8"/><path d="M8.6 8.4L13.6 13.4" stroke="#ffd978" stroke-width="0.9"/></svg></div>
<div class="it" style="top:143px;letter-spacing:-0.09px"><u style="text-underline-offset:1.5px">O</u>ptions...</div>
<div class="mic" style="top:168px"><svg width="16" height="16" viewBox="0 0 16 16"><g transform="translate(0.8,0.2) scale(1.0)"><path d="M0.4 15.6C0.2 10.8 3 9.6 7.2 9.6C11.4 9.6 14.2 10.8 14 15.6Z" fill="#3fae4c" stroke="#00000040" stroke-width="0.5"/><path d="M5.4 9.8L7.2 12.6L9 9.8Z" fill="#f6f6f6"/><ellipse cx="7.2" cy="5.2" rx="4.2" ry="4.8" fill="#f5a338" stroke="#00000040" stroke-width="0.5"/></g></svg></div>
<div class="it" style="top:168px;letter-spacing:-0.55px">Users...</div>
<div class="mic" style="top:190px"><svg width="16" height="16" viewBox="0 0 16 16"><g transform="translate(0,1.4) scale(0.66)"><path d="M0.4 15.6C0.2 10.8 3 9.6 7.2 9.6C11.4 9.6 14.2 10.8 14 15.6Z" fill="#3a6ee0" stroke="#00000040" stroke-width="0.5"/><path d="M5.4 9.8L7.2 12.6L9 9.8Z" fill="#f6f6f6"/><ellipse cx="7.2" cy="5.2" rx="4.2" ry="4.8" fill="#6a3420" stroke="#00000040" stroke-width="0.5"/></g><g transform="translate(6.2,1.4) scale(0.66)"><path d="M0.4 15.6C0.2 10.8 3 9.6 7.2 9.6C11.4 9.6 14.2 10.8 14 15.6Z" fill="#3fae4c" stroke="#00000040" stroke-width="0.5"/><path d="M5.4 9.8L7.2 12.6L9 9.8Z" fill="#f6f6f6"/><ellipse cx="7.2" cy="5.2" rx="4.2" ry="4.8" fill="#f5a338" stroke="#00000040" stroke-width="0.5"/></g><path d="M0.6 4.6C0.6 1 6.4 1 6.4 4.6" fill="#1c1410" /></svg></div>
<div class="it" style="top:190px;letter-spacing:-0.35px">Groups...</div>
</div>
</div>
</body></html>
